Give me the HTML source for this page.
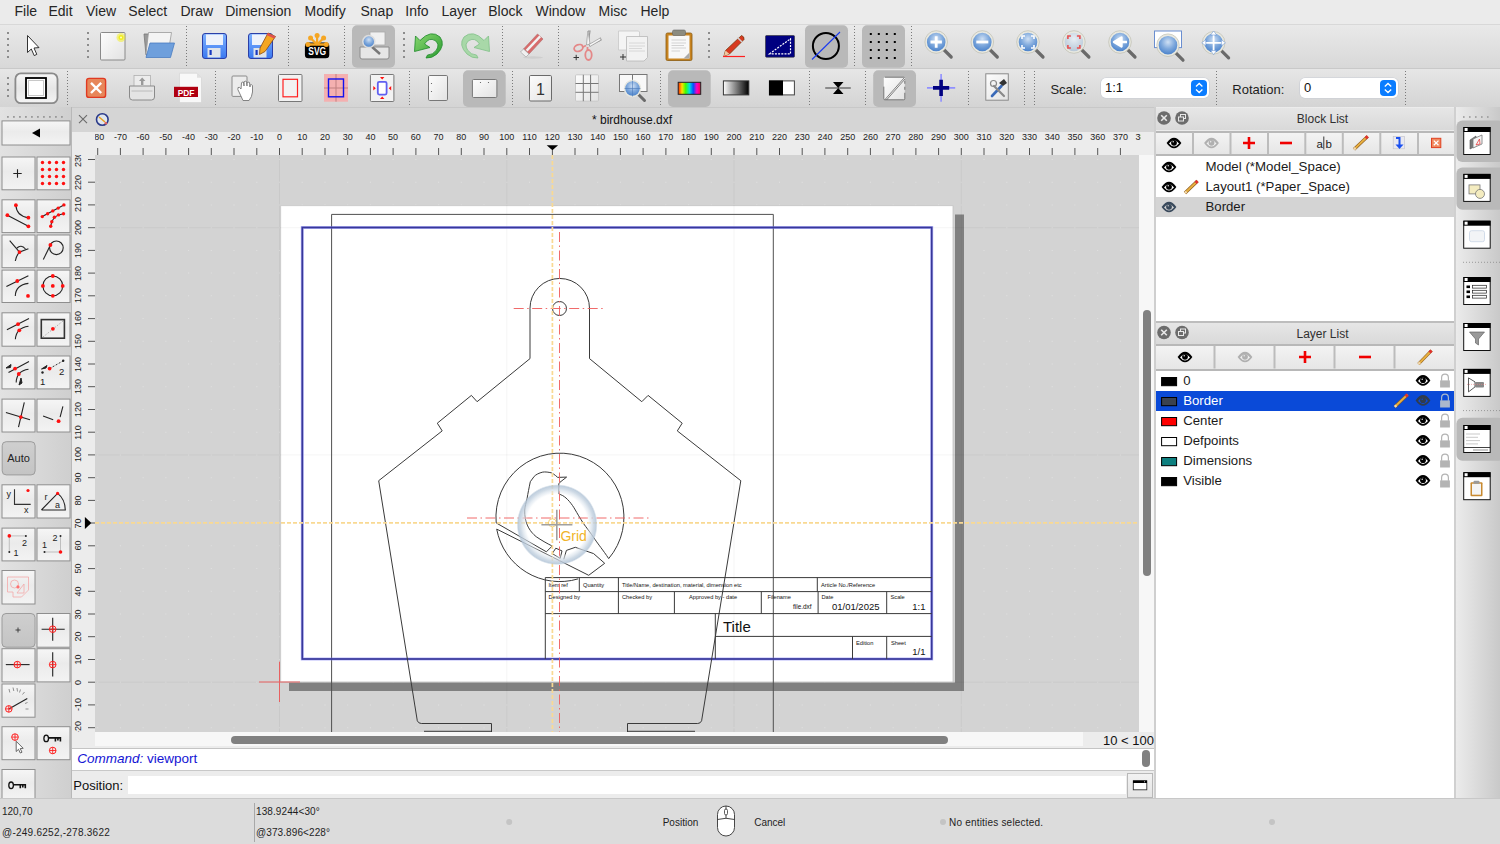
<!DOCTYPE html>
<html><head><meta charset="utf-8">
<style>
*{box-sizing:border-box}
html,body{margin:0;padding:0}
body{width:1500px;height:844px;position:relative;overflow:hidden;background:#e4e4e4;font-family:"Liberation Sans",sans-serif;color:#222}
.a{position:absolute}
.t{position:absolute;white-space:nowrap;line-height:1}
svg{position:absolute;overflow:hidden}
#menubar{left:0;top:0;width:1500px;height:24px;background:#ebebeb}
#menubar span{position:absolute;top:3px;font-size:14px;color:#262626}
#tb1{left:0;top:24px;width:1500px;height:44px;background:linear-gradient(#e9e9e9,#d8d8d8);border-top:1px solid #d8d8d8}
#tb2{left:0;top:68px;width:1500px;height:39px;background:linear-gradient(#e6e6e6,#d4d4d4);border-top:1px solid #c9c9c9}
.sep{position:absolute;width:2px;border-left:2px dotted #888}
.pressed{position:absolute;background:#b9b9b9;border-radius:5px}
#left{left:0;top:107px;width:72px;height:691px;background:linear-gradient(90deg,#e2e2e2,#cfcfcf);border-right:1px solid #b8b8b8}
#tabbar{left:72px;top:107px;width:1082px;height:25px;background:#d5d5d5;border-top:1px solid #c8c8c8}
#rtop{left:72px;top:132px;width:1082px;height:23px;background:#ececec}
#rleft{left:72px;top:155px;width:23px;height:591px;background:#ececec}
#vscroll{left:1139px;top:155px;width:15px;height:577px;background:#f7f7f7}
#hscroll{left:95px;top:732px;width:988px;height:14px;background:#f7f7f7}
#scalelbl{left:1083px;top:732px;width:71px;height:14px;background:#ececec}
#cmd{left:72px;top:746px;width:1082px;height:52px;background:#ececec}
#status{left:0;top:798px;width:1500px;height:46px;background:#dcdcdc;border-top:1px solid #c8c8c8}
#dock{left:1154px;top:107px;width:301px;height:691px;background:#ececec;border-left:2px solid #c4c4c4}
#rtool{left:1455px;top:107px;width:45px;height:691px;background:linear-gradient(90deg,#ececec,#c9c9c9)}
.sb{font-size:10px;color:#1e1e1e}
.rl{position:absolute;font-size:9px;line-height:1;color:#222;white-space:nowrap;text-align:center;width:30px}

</style></head><body>
<div id="menubar" class="a">
<span style="left:14.5px">File</span><span style="left:48.5px">Edit</span><span style="left:86px">View</span><span style="left:128.3px">Select</span><span style="left:180.4px">Draw</span><span style="left:225.2px">Dimension</span><span style="left:304.5px">Modify</span><span style="left:360.5px">Snap</span><span style="left:405.3px">Info</span><span style="left:441.5px">Layer</span><span style="left:488.2px">Block</span><span style="left:535.5px">Window</span><span style="left:598.5px">Misc</span><span style="left:640.5px">Help</span>
</div>
<div id="tb1" class="a"></div>
<div id="tb2" class="a"></div>
<div id="left" class="a"></div>
<div id="tabbar" class="a"></div>
<div id="rtop" class="a"></div>
<div id="rleft" class="a"></div>
<div id="vscroll" class="a"></div>
<div id="hscroll" class="a"></div>
<div id="scalelbl" class="a"></div>
<div id="cmd" class="a"></div>
<div id="status" class="a"></div>
<div id="dock" class="a"></div>
<div id="rtool" class="a"></div>

<svg style="left:95px;top:155px" width="1044" height="577" viewBox="95 155 1044 577">
<defs><radialGradient id="glow" cx="0.5" cy="0.5" r="0.5"><stop offset="0" stop-color="#ffffff" stop-opacity="0"/><stop offset="0.74" stop-color="#ffffff" stop-opacity="0"/><stop offset="0.8" stop-color="#e4ebf2" stop-opacity="0.5"/><stop offset="0.9" stop-color="#c4d2e0" stop-opacity="0.8"/><stop offset="0.96" stop-color="#b4c6d8" stop-opacity="0.85"/><stop offset="1" stop-color="#b8c8d8" stop-opacity="0"/></radialGradient></defs>
<rect x="95" y="155" width="1044" height="577" fill="#d3d3d3"/>
<path d="M97.2 727.2h1v1h-1zM97.2 704.4h1v1h-1zM97.2 681.7h1v1h-1zM97.2 659.0h1v1h-1zM97.2 636.2h1v1h-1zM97.2 613.5h1v1h-1zM97.2 590.8h1v1h-1zM97.2 568.1h1v1h-1zM97.2 545.3h1v1h-1zM97.2 522.6h1v1h-1zM97.2 499.9h1v1h-1zM97.2 477.2h1v1h-1zM97.2 454.4h1v1h-1zM97.2 431.7h1v1h-1zM97.2 409.0h1v1h-1zM97.2 386.2h1v1h-1zM97.2 363.5h1v1h-1zM97.2 340.8h1v1h-1zM97.2 318.1h1v1h-1zM97.2 295.3h1v1h-1zM97.2 272.6h1v1h-1zM97.2 249.9h1v1h-1zM97.2 227.2h1v1h-1zM97.2 204.4h1v1h-1zM97.2 181.7h1v1h-1zM97.2 159.0h1v1h-1zM119.9 727.2h1v1h-1zM119.9 704.4h1v1h-1zM119.9 681.7h1v1h-1zM119.9 659.0h1v1h-1zM119.9 636.2h1v1h-1zM119.9 613.5h1v1h-1zM119.9 590.8h1v1h-1zM119.9 568.1h1v1h-1zM119.9 545.3h1v1h-1zM119.9 522.6h1v1h-1zM119.9 499.9h1v1h-1zM119.9 477.2h1v1h-1zM119.9 454.4h1v1h-1zM119.9 431.7h1v1h-1zM119.9 409.0h1v1h-1zM119.9 386.2h1v1h-1zM119.9 363.5h1v1h-1zM119.9 340.8h1v1h-1zM119.9 318.1h1v1h-1zM119.9 295.3h1v1h-1zM119.9 272.6h1v1h-1zM119.9 249.9h1v1h-1zM119.9 227.2h1v1h-1zM119.9 204.4h1v1h-1zM119.9 181.7h1v1h-1zM119.9 159.0h1v1h-1zM142.6 727.2h1v1h-1zM142.6 704.4h1v1h-1zM142.6 681.7h1v1h-1zM142.6 659.0h1v1h-1zM142.6 636.2h1v1h-1zM142.6 613.5h1v1h-1zM142.6 590.8h1v1h-1zM142.6 568.1h1v1h-1zM142.6 545.3h1v1h-1zM142.6 522.6h1v1h-1zM142.6 499.9h1v1h-1zM142.6 477.2h1v1h-1zM142.6 454.4h1v1h-1zM142.6 431.7h1v1h-1zM142.6 409.0h1v1h-1zM142.6 386.2h1v1h-1zM142.6 363.5h1v1h-1zM142.6 340.8h1v1h-1zM142.6 318.1h1v1h-1zM142.6 295.3h1v1h-1zM142.6 272.6h1v1h-1zM142.6 249.9h1v1h-1zM142.6 227.2h1v1h-1zM142.6 204.4h1v1h-1zM142.6 181.7h1v1h-1zM142.6 159.0h1v1h-1zM165.4 727.2h1v1h-1zM165.4 704.4h1v1h-1zM165.4 681.7h1v1h-1zM165.4 659.0h1v1h-1zM165.4 636.2h1v1h-1zM165.4 613.5h1v1h-1zM165.4 590.8h1v1h-1zM165.4 568.1h1v1h-1zM165.4 545.3h1v1h-1zM165.4 522.6h1v1h-1zM165.4 499.9h1v1h-1zM165.4 477.2h1v1h-1zM165.4 454.4h1v1h-1zM165.4 431.7h1v1h-1zM165.4 409.0h1v1h-1zM165.4 386.2h1v1h-1zM165.4 363.5h1v1h-1zM165.4 340.8h1v1h-1zM165.4 318.1h1v1h-1zM165.4 295.3h1v1h-1zM165.4 272.6h1v1h-1zM165.4 249.9h1v1h-1zM165.4 227.2h1v1h-1zM165.4 204.4h1v1h-1zM165.4 181.7h1v1h-1zM165.4 159.0h1v1h-1zM188.1 727.2h1v1h-1zM188.1 704.4h1v1h-1zM188.1 681.7h1v1h-1zM188.1 659.0h1v1h-1zM188.1 636.2h1v1h-1zM188.1 613.5h1v1h-1zM188.1 590.8h1v1h-1zM188.1 568.1h1v1h-1zM188.1 545.3h1v1h-1zM188.1 522.6h1v1h-1zM188.1 499.9h1v1h-1zM188.1 477.2h1v1h-1zM188.1 454.4h1v1h-1zM188.1 431.7h1v1h-1zM188.1 409.0h1v1h-1zM188.1 386.2h1v1h-1zM188.1 363.5h1v1h-1zM188.1 340.8h1v1h-1zM188.1 318.1h1v1h-1zM188.1 295.3h1v1h-1zM188.1 272.6h1v1h-1zM188.1 249.9h1v1h-1zM188.1 227.2h1v1h-1zM188.1 204.4h1v1h-1zM188.1 181.7h1v1h-1zM188.1 159.0h1v1h-1zM210.8 727.2h1v1h-1zM210.8 704.4h1v1h-1zM210.8 681.7h1v1h-1zM210.8 659.0h1v1h-1zM210.8 636.2h1v1h-1zM210.8 613.5h1v1h-1zM210.8 590.8h1v1h-1zM210.8 568.1h1v1h-1zM210.8 545.3h1v1h-1zM210.8 522.6h1v1h-1zM210.8 499.9h1v1h-1zM210.8 477.2h1v1h-1zM210.8 454.4h1v1h-1zM210.8 431.7h1v1h-1zM210.8 409.0h1v1h-1zM210.8 386.2h1v1h-1zM210.8 363.5h1v1h-1zM210.8 340.8h1v1h-1zM210.8 318.1h1v1h-1zM210.8 295.3h1v1h-1zM210.8 272.6h1v1h-1zM210.8 249.9h1v1h-1zM210.8 227.2h1v1h-1zM210.8 204.4h1v1h-1zM210.8 181.7h1v1h-1zM210.8 159.0h1v1h-1zM233.5 727.2h1v1h-1zM233.5 704.4h1v1h-1zM233.5 681.7h1v1h-1zM233.5 659.0h1v1h-1zM233.5 636.2h1v1h-1zM233.5 613.5h1v1h-1zM233.5 590.8h1v1h-1zM233.5 568.1h1v1h-1zM233.5 545.3h1v1h-1zM233.5 522.6h1v1h-1zM233.5 499.9h1v1h-1zM233.5 477.2h1v1h-1zM233.5 454.4h1v1h-1zM233.5 431.7h1v1h-1zM233.5 409.0h1v1h-1zM233.5 386.2h1v1h-1zM233.5 363.5h1v1h-1zM233.5 340.8h1v1h-1zM233.5 318.1h1v1h-1zM233.5 295.3h1v1h-1zM233.5 272.6h1v1h-1zM233.5 249.9h1v1h-1zM233.5 227.2h1v1h-1zM233.5 204.4h1v1h-1zM233.5 181.7h1v1h-1zM233.5 159.0h1v1h-1zM256.3 727.2h1v1h-1zM256.3 704.4h1v1h-1zM256.3 681.7h1v1h-1zM256.3 659.0h1v1h-1zM256.3 636.2h1v1h-1zM256.3 613.5h1v1h-1zM256.3 590.8h1v1h-1zM256.3 568.1h1v1h-1zM256.3 545.3h1v1h-1zM256.3 522.6h1v1h-1zM256.3 499.9h1v1h-1zM256.3 477.2h1v1h-1zM256.3 454.4h1v1h-1zM256.3 431.7h1v1h-1zM256.3 409.0h1v1h-1zM256.3 386.2h1v1h-1zM256.3 363.5h1v1h-1zM256.3 340.8h1v1h-1zM256.3 318.1h1v1h-1zM256.3 295.3h1v1h-1zM256.3 272.6h1v1h-1zM256.3 249.9h1v1h-1zM256.3 227.2h1v1h-1zM256.3 204.4h1v1h-1zM256.3 181.7h1v1h-1zM256.3 159.0h1v1h-1zM279.0 727.2h1v1h-1zM279.0 704.4h1v1h-1zM279.0 681.7h1v1h-1zM279.0 659.0h1v1h-1zM279.0 636.2h1v1h-1zM279.0 613.5h1v1h-1zM279.0 590.8h1v1h-1zM279.0 568.1h1v1h-1zM279.0 545.3h1v1h-1zM279.0 522.6h1v1h-1zM279.0 499.9h1v1h-1zM279.0 477.2h1v1h-1zM279.0 454.4h1v1h-1zM279.0 431.7h1v1h-1zM279.0 409.0h1v1h-1zM279.0 386.2h1v1h-1zM279.0 363.5h1v1h-1zM279.0 340.8h1v1h-1zM279.0 318.1h1v1h-1zM279.0 295.3h1v1h-1zM279.0 272.6h1v1h-1zM279.0 249.9h1v1h-1zM279.0 227.2h1v1h-1zM279.0 204.4h1v1h-1zM279.0 181.7h1v1h-1zM279.0 159.0h1v1h-1zM301.7 727.2h1v1h-1zM301.7 704.4h1v1h-1zM301.7 681.7h1v1h-1zM301.7 659.0h1v1h-1zM301.7 636.2h1v1h-1zM301.7 613.5h1v1h-1zM301.7 590.8h1v1h-1zM301.7 568.1h1v1h-1zM301.7 545.3h1v1h-1zM301.7 522.6h1v1h-1zM301.7 499.9h1v1h-1zM301.7 477.2h1v1h-1zM301.7 454.4h1v1h-1zM301.7 431.7h1v1h-1zM301.7 409.0h1v1h-1zM301.7 386.2h1v1h-1zM301.7 363.5h1v1h-1zM301.7 340.8h1v1h-1zM301.7 318.1h1v1h-1zM301.7 295.3h1v1h-1zM301.7 272.6h1v1h-1zM301.7 249.9h1v1h-1zM301.7 227.2h1v1h-1zM301.7 204.4h1v1h-1zM301.7 181.7h1v1h-1zM301.7 159.0h1v1h-1zM324.5 727.2h1v1h-1zM324.5 704.4h1v1h-1zM324.5 681.7h1v1h-1zM324.5 659.0h1v1h-1zM324.5 636.2h1v1h-1zM324.5 613.5h1v1h-1zM324.5 590.8h1v1h-1zM324.5 568.1h1v1h-1zM324.5 545.3h1v1h-1zM324.5 522.6h1v1h-1zM324.5 499.9h1v1h-1zM324.5 477.2h1v1h-1zM324.5 454.4h1v1h-1zM324.5 431.7h1v1h-1zM324.5 409.0h1v1h-1zM324.5 386.2h1v1h-1zM324.5 363.5h1v1h-1zM324.5 340.8h1v1h-1zM324.5 318.1h1v1h-1zM324.5 295.3h1v1h-1zM324.5 272.6h1v1h-1zM324.5 249.9h1v1h-1zM324.5 227.2h1v1h-1zM324.5 204.4h1v1h-1zM324.5 181.7h1v1h-1zM324.5 159.0h1v1h-1zM347.2 727.2h1v1h-1zM347.2 704.4h1v1h-1zM347.2 681.7h1v1h-1zM347.2 659.0h1v1h-1zM347.2 636.2h1v1h-1zM347.2 613.5h1v1h-1zM347.2 590.8h1v1h-1zM347.2 568.1h1v1h-1zM347.2 545.3h1v1h-1zM347.2 522.6h1v1h-1zM347.2 499.9h1v1h-1zM347.2 477.2h1v1h-1zM347.2 454.4h1v1h-1zM347.2 431.7h1v1h-1zM347.2 409.0h1v1h-1zM347.2 386.2h1v1h-1zM347.2 363.5h1v1h-1zM347.2 340.8h1v1h-1zM347.2 318.1h1v1h-1zM347.2 295.3h1v1h-1zM347.2 272.6h1v1h-1zM347.2 249.9h1v1h-1zM347.2 227.2h1v1h-1zM347.2 204.4h1v1h-1zM347.2 181.7h1v1h-1zM347.2 159.0h1v1h-1zM369.9 727.2h1v1h-1zM369.9 704.4h1v1h-1zM369.9 681.7h1v1h-1zM369.9 659.0h1v1h-1zM369.9 636.2h1v1h-1zM369.9 613.5h1v1h-1zM369.9 590.8h1v1h-1zM369.9 568.1h1v1h-1zM369.9 545.3h1v1h-1zM369.9 522.6h1v1h-1zM369.9 499.9h1v1h-1zM369.9 477.2h1v1h-1zM369.9 454.4h1v1h-1zM369.9 431.7h1v1h-1zM369.9 409.0h1v1h-1zM369.9 386.2h1v1h-1zM369.9 363.5h1v1h-1zM369.9 340.8h1v1h-1zM369.9 318.1h1v1h-1zM369.9 295.3h1v1h-1zM369.9 272.6h1v1h-1zM369.9 249.9h1v1h-1zM369.9 227.2h1v1h-1zM369.9 204.4h1v1h-1zM369.9 181.7h1v1h-1zM369.9 159.0h1v1h-1zM392.6 727.2h1v1h-1zM392.6 704.4h1v1h-1zM392.6 681.7h1v1h-1zM392.6 659.0h1v1h-1zM392.6 636.2h1v1h-1zM392.6 613.5h1v1h-1zM392.6 590.8h1v1h-1zM392.6 568.1h1v1h-1zM392.6 545.3h1v1h-1zM392.6 522.6h1v1h-1zM392.6 499.9h1v1h-1zM392.6 477.2h1v1h-1zM392.6 454.4h1v1h-1zM392.6 431.7h1v1h-1zM392.6 409.0h1v1h-1zM392.6 386.2h1v1h-1zM392.6 363.5h1v1h-1zM392.6 340.8h1v1h-1zM392.6 318.1h1v1h-1zM392.6 295.3h1v1h-1zM392.6 272.6h1v1h-1zM392.6 249.9h1v1h-1zM392.6 227.2h1v1h-1zM392.6 204.4h1v1h-1zM392.6 181.7h1v1h-1zM392.6 159.0h1v1h-1zM415.4 727.2h1v1h-1zM415.4 704.4h1v1h-1zM415.4 681.7h1v1h-1zM415.4 659.0h1v1h-1zM415.4 636.2h1v1h-1zM415.4 613.5h1v1h-1zM415.4 590.8h1v1h-1zM415.4 568.1h1v1h-1zM415.4 545.3h1v1h-1zM415.4 522.6h1v1h-1zM415.4 499.9h1v1h-1zM415.4 477.2h1v1h-1zM415.4 454.4h1v1h-1zM415.4 431.7h1v1h-1zM415.4 409.0h1v1h-1zM415.4 386.2h1v1h-1zM415.4 363.5h1v1h-1zM415.4 340.8h1v1h-1zM415.4 318.1h1v1h-1zM415.4 295.3h1v1h-1zM415.4 272.6h1v1h-1zM415.4 249.9h1v1h-1zM415.4 227.2h1v1h-1zM415.4 204.4h1v1h-1zM415.4 181.7h1v1h-1zM415.4 159.0h1v1h-1zM438.1 727.2h1v1h-1zM438.1 704.4h1v1h-1zM438.1 681.7h1v1h-1zM438.1 659.0h1v1h-1zM438.1 636.2h1v1h-1zM438.1 613.5h1v1h-1zM438.1 590.8h1v1h-1zM438.1 568.1h1v1h-1zM438.1 545.3h1v1h-1zM438.1 522.6h1v1h-1zM438.1 499.9h1v1h-1zM438.1 477.2h1v1h-1zM438.1 454.4h1v1h-1zM438.1 431.7h1v1h-1zM438.1 409.0h1v1h-1zM438.1 386.2h1v1h-1zM438.1 363.5h1v1h-1zM438.1 340.8h1v1h-1zM438.1 318.1h1v1h-1zM438.1 295.3h1v1h-1zM438.1 272.6h1v1h-1zM438.1 249.9h1v1h-1zM438.1 227.2h1v1h-1zM438.1 204.4h1v1h-1zM438.1 181.7h1v1h-1zM438.1 159.0h1v1h-1zM460.8 727.2h1v1h-1zM460.8 704.4h1v1h-1zM460.8 681.7h1v1h-1zM460.8 659.0h1v1h-1zM460.8 636.2h1v1h-1zM460.8 613.5h1v1h-1zM460.8 590.8h1v1h-1zM460.8 568.1h1v1h-1zM460.8 545.3h1v1h-1zM460.8 522.6h1v1h-1zM460.8 499.9h1v1h-1zM460.8 477.2h1v1h-1zM460.8 454.4h1v1h-1zM460.8 431.7h1v1h-1zM460.8 409.0h1v1h-1zM460.8 386.2h1v1h-1zM460.8 363.5h1v1h-1zM460.8 340.8h1v1h-1zM460.8 318.1h1v1h-1zM460.8 295.3h1v1h-1zM460.8 272.6h1v1h-1zM460.8 249.9h1v1h-1zM460.8 227.2h1v1h-1zM460.8 204.4h1v1h-1zM460.8 181.7h1v1h-1zM460.8 159.0h1v1h-1zM483.5 727.2h1v1h-1zM483.5 704.4h1v1h-1zM483.5 681.7h1v1h-1zM483.5 659.0h1v1h-1zM483.5 636.2h1v1h-1zM483.5 613.5h1v1h-1zM483.5 590.8h1v1h-1zM483.5 568.1h1v1h-1zM483.5 545.3h1v1h-1zM483.5 522.6h1v1h-1zM483.5 499.9h1v1h-1zM483.5 477.2h1v1h-1zM483.5 454.4h1v1h-1zM483.5 431.7h1v1h-1zM483.5 409.0h1v1h-1zM483.5 386.2h1v1h-1zM483.5 363.5h1v1h-1zM483.5 340.8h1v1h-1zM483.5 318.1h1v1h-1zM483.5 295.3h1v1h-1zM483.5 272.6h1v1h-1zM483.5 249.9h1v1h-1zM483.5 227.2h1v1h-1zM483.5 204.4h1v1h-1zM483.5 181.7h1v1h-1zM483.5 159.0h1v1h-1zM506.3 727.2h1v1h-1zM506.3 704.4h1v1h-1zM506.3 681.7h1v1h-1zM506.3 659.0h1v1h-1zM506.3 636.2h1v1h-1zM506.3 613.5h1v1h-1zM506.3 590.8h1v1h-1zM506.3 568.1h1v1h-1zM506.3 545.3h1v1h-1zM506.3 522.6h1v1h-1zM506.3 499.9h1v1h-1zM506.3 477.2h1v1h-1zM506.3 454.4h1v1h-1zM506.3 431.7h1v1h-1zM506.3 409.0h1v1h-1zM506.3 386.2h1v1h-1zM506.3 363.5h1v1h-1zM506.3 340.8h1v1h-1zM506.3 318.1h1v1h-1zM506.3 295.3h1v1h-1zM506.3 272.6h1v1h-1zM506.3 249.9h1v1h-1zM506.3 227.2h1v1h-1zM506.3 204.4h1v1h-1zM506.3 181.7h1v1h-1zM506.3 159.0h1v1h-1zM529.0 727.2h1v1h-1zM529.0 704.4h1v1h-1zM529.0 681.7h1v1h-1zM529.0 659.0h1v1h-1zM529.0 636.2h1v1h-1zM529.0 613.5h1v1h-1zM529.0 590.8h1v1h-1zM529.0 568.1h1v1h-1zM529.0 545.3h1v1h-1zM529.0 522.6h1v1h-1zM529.0 499.9h1v1h-1zM529.0 477.2h1v1h-1zM529.0 454.4h1v1h-1zM529.0 431.7h1v1h-1zM529.0 409.0h1v1h-1zM529.0 386.2h1v1h-1zM529.0 363.5h1v1h-1zM529.0 340.8h1v1h-1zM529.0 318.1h1v1h-1zM529.0 295.3h1v1h-1zM529.0 272.6h1v1h-1zM529.0 249.9h1v1h-1zM529.0 227.2h1v1h-1zM529.0 204.4h1v1h-1zM529.0 181.7h1v1h-1zM529.0 159.0h1v1h-1zM551.7 727.2h1v1h-1zM551.7 704.4h1v1h-1zM551.7 681.7h1v1h-1zM551.7 659.0h1v1h-1zM551.7 636.2h1v1h-1zM551.7 613.5h1v1h-1zM551.7 590.8h1v1h-1zM551.7 568.1h1v1h-1zM551.7 545.3h1v1h-1zM551.7 522.6h1v1h-1zM551.7 499.9h1v1h-1zM551.7 477.2h1v1h-1zM551.7 454.4h1v1h-1zM551.7 431.7h1v1h-1zM551.7 409.0h1v1h-1zM551.7 386.2h1v1h-1zM551.7 363.5h1v1h-1zM551.7 340.8h1v1h-1zM551.7 318.1h1v1h-1zM551.7 295.3h1v1h-1zM551.7 272.6h1v1h-1zM551.7 249.9h1v1h-1zM551.7 227.2h1v1h-1zM551.7 204.4h1v1h-1zM551.7 181.7h1v1h-1zM551.7 159.0h1v1h-1zM574.5 727.2h1v1h-1zM574.5 704.4h1v1h-1zM574.5 681.7h1v1h-1zM574.5 659.0h1v1h-1zM574.5 636.2h1v1h-1zM574.5 613.5h1v1h-1zM574.5 590.8h1v1h-1zM574.5 568.1h1v1h-1zM574.5 545.3h1v1h-1zM574.5 522.6h1v1h-1zM574.5 499.9h1v1h-1zM574.5 477.2h1v1h-1zM574.5 454.4h1v1h-1zM574.5 431.7h1v1h-1zM574.5 409.0h1v1h-1zM574.5 386.2h1v1h-1zM574.5 363.5h1v1h-1zM574.5 340.8h1v1h-1zM574.5 318.1h1v1h-1zM574.5 295.3h1v1h-1zM574.5 272.6h1v1h-1zM574.5 249.9h1v1h-1zM574.5 227.2h1v1h-1zM574.5 204.4h1v1h-1zM574.5 181.7h1v1h-1zM574.5 159.0h1v1h-1zM597.2 727.2h1v1h-1zM597.2 704.4h1v1h-1zM597.2 681.7h1v1h-1zM597.2 659.0h1v1h-1zM597.2 636.2h1v1h-1zM597.2 613.5h1v1h-1zM597.2 590.8h1v1h-1zM597.2 568.1h1v1h-1zM597.2 545.3h1v1h-1zM597.2 522.6h1v1h-1zM597.2 499.9h1v1h-1zM597.2 477.2h1v1h-1zM597.2 454.4h1v1h-1zM597.2 431.7h1v1h-1zM597.2 409.0h1v1h-1zM597.2 386.2h1v1h-1zM597.2 363.5h1v1h-1zM597.2 340.8h1v1h-1zM597.2 318.1h1v1h-1zM597.2 295.3h1v1h-1zM597.2 272.6h1v1h-1zM597.2 249.9h1v1h-1zM597.2 227.2h1v1h-1zM597.2 204.4h1v1h-1zM597.2 181.7h1v1h-1zM597.2 159.0h1v1h-1zM619.9 727.2h1v1h-1zM619.9 704.4h1v1h-1zM619.9 681.7h1v1h-1zM619.9 659.0h1v1h-1zM619.9 636.2h1v1h-1zM619.9 613.5h1v1h-1zM619.9 590.8h1v1h-1zM619.9 568.1h1v1h-1zM619.9 545.3h1v1h-1zM619.9 522.6h1v1h-1zM619.9 499.9h1v1h-1zM619.9 477.2h1v1h-1zM619.9 454.4h1v1h-1zM619.9 431.7h1v1h-1zM619.9 409.0h1v1h-1zM619.9 386.2h1v1h-1zM619.9 363.5h1v1h-1zM619.9 340.8h1v1h-1zM619.9 318.1h1v1h-1zM619.9 295.3h1v1h-1zM619.9 272.6h1v1h-1zM619.9 249.9h1v1h-1zM619.9 227.2h1v1h-1zM619.9 204.4h1v1h-1zM619.9 181.7h1v1h-1zM619.9 159.0h1v1h-1zM642.6 727.2h1v1h-1zM642.6 704.4h1v1h-1zM642.6 681.7h1v1h-1zM642.6 659.0h1v1h-1zM642.6 636.2h1v1h-1zM642.6 613.5h1v1h-1zM642.6 590.8h1v1h-1zM642.6 568.1h1v1h-1zM642.6 545.3h1v1h-1zM642.6 522.6h1v1h-1zM642.6 499.9h1v1h-1zM642.6 477.2h1v1h-1zM642.6 454.4h1v1h-1zM642.6 431.7h1v1h-1zM642.6 409.0h1v1h-1zM642.6 386.2h1v1h-1zM642.6 363.5h1v1h-1zM642.6 340.8h1v1h-1zM642.6 318.1h1v1h-1zM642.6 295.3h1v1h-1zM642.6 272.6h1v1h-1zM642.6 249.9h1v1h-1zM642.6 227.2h1v1h-1zM642.6 204.4h1v1h-1zM642.6 181.7h1v1h-1zM642.6 159.0h1v1h-1zM665.4 727.2h1v1h-1zM665.4 704.4h1v1h-1zM665.4 681.7h1v1h-1zM665.4 659.0h1v1h-1zM665.4 636.2h1v1h-1zM665.4 613.5h1v1h-1zM665.4 590.8h1v1h-1zM665.4 568.1h1v1h-1zM665.4 545.3h1v1h-1zM665.4 522.6h1v1h-1zM665.4 499.9h1v1h-1zM665.4 477.2h1v1h-1zM665.4 454.4h1v1h-1zM665.4 431.7h1v1h-1zM665.4 409.0h1v1h-1zM665.4 386.2h1v1h-1zM665.4 363.5h1v1h-1zM665.4 340.8h1v1h-1zM665.4 318.1h1v1h-1zM665.4 295.3h1v1h-1zM665.4 272.6h1v1h-1zM665.4 249.9h1v1h-1zM665.4 227.2h1v1h-1zM665.4 204.4h1v1h-1zM665.4 181.7h1v1h-1zM665.4 159.0h1v1h-1zM688.1 727.2h1v1h-1zM688.1 704.4h1v1h-1zM688.1 681.7h1v1h-1zM688.1 659.0h1v1h-1zM688.1 636.2h1v1h-1zM688.1 613.5h1v1h-1zM688.1 590.8h1v1h-1zM688.1 568.1h1v1h-1zM688.1 545.3h1v1h-1zM688.1 522.6h1v1h-1zM688.1 499.9h1v1h-1zM688.1 477.2h1v1h-1zM688.1 454.4h1v1h-1zM688.1 431.7h1v1h-1zM688.1 409.0h1v1h-1zM688.1 386.2h1v1h-1zM688.1 363.5h1v1h-1zM688.1 340.8h1v1h-1zM688.1 318.1h1v1h-1zM688.1 295.3h1v1h-1zM688.1 272.6h1v1h-1zM688.1 249.9h1v1h-1zM688.1 227.2h1v1h-1zM688.1 204.4h1v1h-1zM688.1 181.7h1v1h-1zM688.1 159.0h1v1h-1zM710.8 727.2h1v1h-1zM710.8 704.4h1v1h-1zM710.8 681.7h1v1h-1zM710.8 659.0h1v1h-1zM710.8 636.2h1v1h-1zM710.8 613.5h1v1h-1zM710.8 590.8h1v1h-1zM710.8 568.1h1v1h-1zM710.8 545.3h1v1h-1zM710.8 522.6h1v1h-1zM710.8 499.9h1v1h-1zM710.8 477.2h1v1h-1zM710.8 454.4h1v1h-1zM710.8 431.7h1v1h-1zM710.8 409.0h1v1h-1zM710.8 386.2h1v1h-1zM710.8 363.5h1v1h-1zM710.8 340.8h1v1h-1zM710.8 318.1h1v1h-1zM710.8 295.3h1v1h-1zM710.8 272.6h1v1h-1zM710.8 249.9h1v1h-1zM710.8 227.2h1v1h-1zM710.8 204.4h1v1h-1zM710.8 181.7h1v1h-1zM710.8 159.0h1v1h-1zM733.5 727.2h1v1h-1zM733.5 704.4h1v1h-1zM733.5 681.7h1v1h-1zM733.5 659.0h1v1h-1zM733.5 636.2h1v1h-1zM733.5 613.5h1v1h-1zM733.5 590.8h1v1h-1zM733.5 568.1h1v1h-1zM733.5 545.3h1v1h-1zM733.5 522.6h1v1h-1zM733.5 499.9h1v1h-1zM733.5 477.2h1v1h-1zM733.5 454.4h1v1h-1zM733.5 431.7h1v1h-1zM733.5 409.0h1v1h-1zM733.5 386.2h1v1h-1zM733.5 363.5h1v1h-1zM733.5 340.8h1v1h-1zM733.5 318.1h1v1h-1zM733.5 295.3h1v1h-1zM733.5 272.6h1v1h-1zM733.5 249.9h1v1h-1zM733.5 227.2h1v1h-1zM733.5 204.4h1v1h-1zM733.5 181.7h1v1h-1zM733.5 159.0h1v1h-1zM756.3 727.2h1v1h-1zM756.3 704.4h1v1h-1zM756.3 681.7h1v1h-1zM756.3 659.0h1v1h-1zM756.3 636.2h1v1h-1zM756.3 613.5h1v1h-1zM756.3 590.8h1v1h-1zM756.3 568.1h1v1h-1zM756.3 545.3h1v1h-1zM756.3 522.6h1v1h-1zM756.3 499.9h1v1h-1zM756.3 477.2h1v1h-1zM756.3 454.4h1v1h-1zM756.3 431.7h1v1h-1zM756.3 409.0h1v1h-1zM756.3 386.2h1v1h-1zM756.3 363.5h1v1h-1zM756.3 340.8h1v1h-1zM756.3 318.1h1v1h-1zM756.3 295.3h1v1h-1zM756.3 272.6h1v1h-1zM756.3 249.9h1v1h-1zM756.3 227.2h1v1h-1zM756.3 204.4h1v1h-1zM756.3 181.7h1v1h-1zM756.3 159.0h1v1h-1zM779.0 727.2h1v1h-1zM779.0 704.4h1v1h-1zM779.0 681.7h1v1h-1zM779.0 659.0h1v1h-1zM779.0 636.2h1v1h-1zM779.0 613.5h1v1h-1zM779.0 590.8h1v1h-1zM779.0 568.1h1v1h-1zM779.0 545.3h1v1h-1zM779.0 522.6h1v1h-1zM779.0 499.9h1v1h-1zM779.0 477.2h1v1h-1zM779.0 454.4h1v1h-1zM779.0 431.7h1v1h-1zM779.0 409.0h1v1h-1zM779.0 386.2h1v1h-1zM779.0 363.5h1v1h-1zM779.0 340.8h1v1h-1zM779.0 318.1h1v1h-1zM779.0 295.3h1v1h-1zM779.0 272.6h1v1h-1zM779.0 249.9h1v1h-1zM779.0 227.2h1v1h-1zM779.0 204.4h1v1h-1zM779.0 181.7h1v1h-1zM779.0 159.0h1v1h-1zM801.7 727.2h1v1h-1zM801.7 704.4h1v1h-1zM801.7 681.7h1v1h-1zM801.7 659.0h1v1h-1zM801.7 636.2h1v1h-1zM801.7 613.5h1v1h-1zM801.7 590.8h1v1h-1zM801.7 568.1h1v1h-1zM801.7 545.3h1v1h-1zM801.7 522.6h1v1h-1zM801.7 499.9h1v1h-1zM801.7 477.2h1v1h-1zM801.7 454.4h1v1h-1zM801.7 431.7h1v1h-1zM801.7 409.0h1v1h-1zM801.7 386.2h1v1h-1zM801.7 363.5h1v1h-1zM801.7 340.8h1v1h-1zM801.7 318.1h1v1h-1zM801.7 295.3h1v1h-1zM801.7 272.6h1v1h-1zM801.7 249.9h1v1h-1zM801.7 227.2h1v1h-1zM801.7 204.4h1v1h-1zM801.7 181.7h1v1h-1zM801.7 159.0h1v1h-1zM824.4 727.2h1v1h-1zM824.4 704.4h1v1h-1zM824.4 681.7h1v1h-1zM824.4 659.0h1v1h-1zM824.4 636.2h1v1h-1zM824.4 613.5h1v1h-1zM824.4 590.8h1v1h-1zM824.4 568.1h1v1h-1zM824.4 545.3h1v1h-1zM824.4 522.6h1v1h-1zM824.4 499.9h1v1h-1zM824.4 477.2h1v1h-1zM824.4 454.4h1v1h-1zM824.4 431.7h1v1h-1zM824.4 409.0h1v1h-1zM824.4 386.2h1v1h-1zM824.4 363.5h1v1h-1zM824.4 340.8h1v1h-1zM824.4 318.1h1v1h-1zM824.4 295.3h1v1h-1zM824.4 272.6h1v1h-1zM824.4 249.9h1v1h-1zM824.4 227.2h1v1h-1zM824.4 204.4h1v1h-1zM824.4 181.7h1v1h-1zM824.4 159.0h1v1h-1zM847.2 727.2h1v1h-1zM847.2 704.4h1v1h-1zM847.2 681.7h1v1h-1zM847.2 659.0h1v1h-1zM847.2 636.2h1v1h-1zM847.2 613.5h1v1h-1zM847.2 590.8h1v1h-1zM847.2 568.1h1v1h-1zM847.2 545.3h1v1h-1zM847.2 522.6h1v1h-1zM847.2 499.9h1v1h-1zM847.2 477.2h1v1h-1zM847.2 454.4h1v1h-1zM847.2 431.7h1v1h-1zM847.2 409.0h1v1h-1zM847.2 386.2h1v1h-1zM847.2 363.5h1v1h-1zM847.2 340.8h1v1h-1zM847.2 318.1h1v1h-1zM847.2 295.3h1v1h-1zM847.2 272.6h1v1h-1zM847.2 249.9h1v1h-1zM847.2 227.2h1v1h-1zM847.2 204.4h1v1h-1zM847.2 181.7h1v1h-1zM847.2 159.0h1v1h-1zM869.9 727.2h1v1h-1zM869.9 704.4h1v1h-1zM869.9 681.7h1v1h-1zM869.9 659.0h1v1h-1zM869.9 636.2h1v1h-1zM869.9 613.5h1v1h-1zM869.9 590.8h1v1h-1zM869.9 568.1h1v1h-1zM869.9 545.3h1v1h-1zM869.9 522.6h1v1h-1zM869.9 499.9h1v1h-1zM869.9 477.2h1v1h-1zM869.9 454.4h1v1h-1zM869.9 431.7h1v1h-1zM869.9 409.0h1v1h-1zM869.9 386.2h1v1h-1zM869.9 363.5h1v1h-1zM869.9 340.8h1v1h-1zM869.9 318.1h1v1h-1zM869.9 295.3h1v1h-1zM869.9 272.6h1v1h-1zM869.9 249.9h1v1h-1zM869.9 227.2h1v1h-1zM869.9 204.4h1v1h-1zM869.9 181.7h1v1h-1zM869.9 159.0h1v1h-1zM892.6 727.2h1v1h-1zM892.6 704.4h1v1h-1zM892.6 681.7h1v1h-1zM892.6 659.0h1v1h-1zM892.6 636.2h1v1h-1zM892.6 613.5h1v1h-1zM892.6 590.8h1v1h-1zM892.6 568.1h1v1h-1zM892.6 545.3h1v1h-1zM892.6 522.6h1v1h-1zM892.6 499.9h1v1h-1zM892.6 477.2h1v1h-1zM892.6 454.4h1v1h-1zM892.6 431.7h1v1h-1zM892.6 409.0h1v1h-1zM892.6 386.2h1v1h-1zM892.6 363.5h1v1h-1zM892.6 340.8h1v1h-1zM892.6 318.1h1v1h-1zM892.6 295.3h1v1h-1zM892.6 272.6h1v1h-1zM892.6 249.9h1v1h-1zM892.6 227.2h1v1h-1zM892.6 204.4h1v1h-1zM892.6 181.7h1v1h-1zM892.6 159.0h1v1h-1zM915.4 727.2h1v1h-1zM915.4 704.4h1v1h-1zM915.4 681.7h1v1h-1zM915.4 659.0h1v1h-1zM915.4 636.2h1v1h-1zM915.4 613.5h1v1h-1zM915.4 590.8h1v1h-1zM915.4 568.1h1v1h-1zM915.4 545.3h1v1h-1zM915.4 522.6h1v1h-1zM915.4 499.9h1v1h-1zM915.4 477.2h1v1h-1zM915.4 454.4h1v1h-1zM915.4 431.7h1v1h-1zM915.4 409.0h1v1h-1zM915.4 386.2h1v1h-1zM915.4 363.5h1v1h-1zM915.4 340.8h1v1h-1zM915.4 318.1h1v1h-1zM915.4 295.3h1v1h-1zM915.4 272.6h1v1h-1zM915.4 249.9h1v1h-1zM915.4 227.2h1v1h-1zM915.4 204.4h1v1h-1zM915.4 181.7h1v1h-1zM915.4 159.0h1v1h-1zM938.1 727.2h1v1h-1zM938.1 704.4h1v1h-1zM938.1 681.7h1v1h-1zM938.1 659.0h1v1h-1zM938.1 636.2h1v1h-1zM938.1 613.5h1v1h-1zM938.1 590.8h1v1h-1zM938.1 568.1h1v1h-1zM938.1 545.3h1v1h-1zM938.1 522.6h1v1h-1zM938.1 499.9h1v1h-1zM938.1 477.2h1v1h-1zM938.1 454.4h1v1h-1zM938.1 431.7h1v1h-1zM938.1 409.0h1v1h-1zM938.1 386.2h1v1h-1zM938.1 363.5h1v1h-1zM938.1 340.8h1v1h-1zM938.1 318.1h1v1h-1zM938.1 295.3h1v1h-1zM938.1 272.6h1v1h-1zM938.1 249.9h1v1h-1zM938.1 227.2h1v1h-1zM938.1 204.4h1v1h-1zM938.1 181.7h1v1h-1zM938.1 159.0h1v1h-1zM960.8 727.2h1v1h-1zM960.8 704.4h1v1h-1zM960.8 681.7h1v1h-1zM960.8 659.0h1v1h-1zM960.8 636.2h1v1h-1zM960.8 613.5h1v1h-1zM960.8 590.8h1v1h-1zM960.8 568.1h1v1h-1zM960.8 545.3h1v1h-1zM960.8 522.6h1v1h-1zM960.8 499.9h1v1h-1zM960.8 477.2h1v1h-1zM960.8 454.4h1v1h-1zM960.8 431.7h1v1h-1zM960.8 409.0h1v1h-1zM960.8 386.2h1v1h-1zM960.8 363.5h1v1h-1zM960.8 340.8h1v1h-1zM960.8 318.1h1v1h-1zM960.8 295.3h1v1h-1zM960.8 272.6h1v1h-1zM960.8 249.9h1v1h-1zM960.8 227.2h1v1h-1zM960.8 204.4h1v1h-1zM960.8 181.7h1v1h-1zM960.8 159.0h1v1h-1zM983.5 727.2h1v1h-1zM983.5 704.4h1v1h-1zM983.5 681.7h1v1h-1zM983.5 659.0h1v1h-1zM983.5 636.2h1v1h-1zM983.5 613.5h1v1h-1zM983.5 590.8h1v1h-1zM983.5 568.1h1v1h-1zM983.5 545.3h1v1h-1zM983.5 522.6h1v1h-1zM983.5 499.9h1v1h-1zM983.5 477.2h1v1h-1zM983.5 454.4h1v1h-1zM983.5 431.7h1v1h-1zM983.5 409.0h1v1h-1zM983.5 386.2h1v1h-1zM983.5 363.5h1v1h-1zM983.5 340.8h1v1h-1zM983.5 318.1h1v1h-1zM983.5 295.3h1v1h-1zM983.5 272.6h1v1h-1zM983.5 249.9h1v1h-1zM983.5 227.2h1v1h-1zM983.5 204.4h1v1h-1zM983.5 181.7h1v1h-1zM983.5 159.0h1v1h-1zM1006.3 727.2h1v1h-1zM1006.3 704.4h1v1h-1zM1006.3 681.7h1v1h-1zM1006.3 659.0h1v1h-1zM1006.3 636.2h1v1h-1zM1006.3 613.5h1v1h-1zM1006.3 590.8h1v1h-1zM1006.3 568.1h1v1h-1zM1006.3 545.3h1v1h-1zM1006.3 522.6h1v1h-1zM1006.3 499.9h1v1h-1zM1006.3 477.2h1v1h-1zM1006.3 454.4h1v1h-1zM1006.3 431.7h1v1h-1zM1006.3 409.0h1v1h-1zM1006.3 386.2h1v1h-1zM1006.3 363.5h1v1h-1zM1006.3 340.8h1v1h-1zM1006.3 318.1h1v1h-1zM1006.3 295.3h1v1h-1zM1006.3 272.6h1v1h-1zM1006.3 249.9h1v1h-1zM1006.3 227.2h1v1h-1zM1006.3 204.4h1v1h-1zM1006.3 181.7h1v1h-1zM1006.3 159.0h1v1h-1zM1029.0 727.2h1v1h-1zM1029.0 704.4h1v1h-1zM1029.0 681.7h1v1h-1zM1029.0 659.0h1v1h-1zM1029.0 636.2h1v1h-1zM1029.0 613.5h1v1h-1zM1029.0 590.8h1v1h-1zM1029.0 568.1h1v1h-1zM1029.0 545.3h1v1h-1zM1029.0 522.6h1v1h-1zM1029.0 499.9h1v1h-1zM1029.0 477.2h1v1h-1zM1029.0 454.4h1v1h-1zM1029.0 431.7h1v1h-1zM1029.0 409.0h1v1h-1zM1029.0 386.2h1v1h-1zM1029.0 363.5h1v1h-1zM1029.0 340.8h1v1h-1zM1029.0 318.1h1v1h-1zM1029.0 295.3h1v1h-1zM1029.0 272.6h1v1h-1zM1029.0 249.9h1v1h-1zM1029.0 227.2h1v1h-1zM1029.0 204.4h1v1h-1zM1029.0 181.7h1v1h-1zM1029.0 159.0h1v1h-1zM1051.7 727.2h1v1h-1zM1051.7 704.4h1v1h-1zM1051.7 681.7h1v1h-1zM1051.7 659.0h1v1h-1zM1051.7 636.2h1v1h-1zM1051.7 613.5h1v1h-1zM1051.7 590.8h1v1h-1zM1051.7 568.1h1v1h-1zM1051.7 545.3h1v1h-1zM1051.7 522.6h1v1h-1zM1051.7 499.9h1v1h-1zM1051.7 477.2h1v1h-1zM1051.7 454.4h1v1h-1zM1051.7 431.7h1v1h-1zM1051.7 409.0h1v1h-1zM1051.7 386.2h1v1h-1zM1051.7 363.5h1v1h-1zM1051.7 340.8h1v1h-1zM1051.7 318.1h1v1h-1zM1051.7 295.3h1v1h-1zM1051.7 272.6h1v1h-1zM1051.7 249.9h1v1h-1zM1051.7 227.2h1v1h-1zM1051.7 204.4h1v1h-1zM1051.7 181.7h1v1h-1zM1051.7 159.0h1v1h-1zM1074.4 727.2h1v1h-1zM1074.4 704.4h1v1h-1zM1074.4 681.7h1v1h-1zM1074.4 659.0h1v1h-1zM1074.4 636.2h1v1h-1zM1074.4 613.5h1v1h-1zM1074.4 590.8h1v1h-1zM1074.4 568.1h1v1h-1zM1074.4 545.3h1v1h-1zM1074.4 522.6h1v1h-1zM1074.4 499.9h1v1h-1zM1074.4 477.2h1v1h-1zM1074.4 454.4h1v1h-1zM1074.4 431.7h1v1h-1zM1074.4 409.0h1v1h-1zM1074.4 386.2h1v1h-1zM1074.4 363.5h1v1h-1zM1074.4 340.8h1v1h-1zM1074.4 318.1h1v1h-1zM1074.4 295.3h1v1h-1zM1074.4 272.6h1v1h-1zM1074.4 249.9h1v1h-1zM1074.4 227.2h1v1h-1zM1074.4 204.4h1v1h-1zM1074.4 181.7h1v1h-1zM1074.4 159.0h1v1h-1zM1097.2 727.2h1v1h-1zM1097.2 704.4h1v1h-1zM1097.2 681.7h1v1h-1zM1097.2 659.0h1v1h-1zM1097.2 636.2h1v1h-1zM1097.2 613.5h1v1h-1zM1097.2 590.8h1v1h-1zM1097.2 568.1h1v1h-1zM1097.2 545.3h1v1h-1zM1097.2 522.6h1v1h-1zM1097.2 499.9h1v1h-1zM1097.2 477.2h1v1h-1zM1097.2 454.4h1v1h-1zM1097.2 431.7h1v1h-1zM1097.2 409.0h1v1h-1zM1097.2 386.2h1v1h-1zM1097.2 363.5h1v1h-1zM1097.2 340.8h1v1h-1zM1097.2 318.1h1v1h-1zM1097.2 295.3h1v1h-1zM1097.2 272.6h1v1h-1zM1097.2 249.9h1v1h-1zM1097.2 227.2h1v1h-1zM1097.2 204.4h1v1h-1zM1097.2 181.7h1v1h-1zM1097.2 159.0h1v1h-1zM1119.9 727.2h1v1h-1zM1119.9 704.4h1v1h-1zM1119.9 681.7h1v1h-1zM1119.9 659.0h1v1h-1zM1119.9 636.2h1v1h-1zM1119.9 613.5h1v1h-1zM1119.9 590.8h1v1h-1zM1119.9 568.1h1v1h-1zM1119.9 545.3h1v1h-1zM1119.9 522.6h1v1h-1zM1119.9 499.9h1v1h-1zM1119.9 477.2h1v1h-1zM1119.9 454.4h1v1h-1zM1119.9 431.7h1v1h-1zM1119.9 409.0h1v1h-1zM1119.9 386.2h1v1h-1zM1119.9 363.5h1v1h-1zM1119.9 340.8h1v1h-1zM1119.9 318.1h1v1h-1zM1119.9 295.3h1v1h-1zM1119.9 272.6h1v1h-1zM1119.9 249.9h1v1h-1zM1119.9 227.2h1v1h-1zM1119.9 204.4h1v1h-1zM1119.9 181.7h1v1h-1zM1119.9 159.0h1v1h-1z" fill="#e2e2e2"/>
<rect x="955" y="214.5" width="9" height="476.5" fill="#808080"/>
<rect x="289" y="682.5" width="675" height="8.5" fill="#808080"/>
<rect x="280.7" y="205.7" width="272.3" height="476.3" fill="#ffffff"/>
<rect x="280.7" y="205.7" width="672.3" height="476.3" fill="#ffffff" stroke="#c4c4c4" stroke-width="0.8"/>
<path d="M279.5 155V732M506.8 155V732M734.0 155V732M961.3 155V732M95 682.2H1139M95 454.9H1139M95 227.7H1139" stroke="#000" stroke-opacity="0.045" stroke-width="1" fill="none"/>
<path d="M331.6 740V214.4H773.3V740" stroke="#505050" stroke-width="1" fill="none"/>
<rect x="302.3" y="227.5" width="629.4" height="431.5" stroke="#7c7cf4" stroke-opacity="0.55" stroke-width="3" fill="none"/><rect x="302.3" y="227.5" width="629.4" height="431.5" stroke="#38389a" stroke-width="1.7" fill="none"/>
<path d="M417.3 720.8L378.7 480.7L442.2 430.9L437.3 423.2L471.4 395.4L477.1 401.7L530 358.6L530 308.2A29.75 29.75 0 0 1 589.5 308.2L589.5 358.6L641.8 401.7L648.1 395.4L682.2 423.2L677.3 430.9L740.8 480.7L701.6 720.8Q700.5 723.5 697.7 723.5L627.5 723.5L627.5 740M417.3 720.8Q418.5 723.5 421.3 723.5L491.5 723.5L491.5 740M424 731.3H491.5M627.5 731.3H695" stroke="#3a3a3a" stroke-width="1" fill="none"/>
<circle cx="559.5" cy="308.5" r="7" stroke="#3a3a3a" stroke-width="1" fill="none"/>
<path d="M496.2 522.9A64 64 0 1 1 608.7 558.6C603 550 598 544 594.9 539.3C590 532 586 527 583.3 523.3C580 518 577 513 575.3 510C572 504 567 498 562.7 495.6L558.8 493.8L558.8 483.8L559.8 482.4L566.6 477.1L557.7 477.4C555 475 552 472.5 549.9 472.5C547 472 545 471.8 542.8 472.1C539 473 536 474.5 534.2 476.4L530.3 481.7C529 488 528 493 527.1 498.4C526 503 525 506 524.7 510C524.5 516 525.5 521 527.3 525.1C530 531 533 534 536.2 536.7C541 540 547 543.5 552.2 546L546.4 551.8ZM496.7 529.1L588.7 575.3L604.7 563.3L593.6 553.6L575.3 547.3L566.4 550.4L563.8 559.3M552.2 553.6L555.8 548.2L562 550.9L560.2 558.4ZM496.7 529.1A64 64 0 0 0 578 578.9" stroke="#3a3a3a" stroke-width="1" fill="none"/>
<path d="M545.3 577.6H931.7M545.3 591.6H931.7M545.3 613.6H931.7M715.3 636.4H931.7M545.3 577.6V659M579.3 577.6V591.6M618.4 577.6V613.6M817.3 577.6V591.6M674.4 591.6V613.6M761.3 591.6V613.6M818.1 591.6V613.6M886.7 591.6V613.6M715.3 613.6V659M852.5 636.4V659M886.7 636.4V659" stroke="#3a3a3a" stroke-width="1" fill="none"/>
<text x="548.5" y="586.5" font-size="5.7" text-anchor="start" fill="#111" font-family="Liberation Sans">Item ref</text>
<text x="583" y="586.5" font-size="5.7" text-anchor="start" fill="#111" font-family="Liberation Sans">Quantity</text>
<text x="622" y="586.5" font-size="5.7" text-anchor="start" fill="#111" font-family="Liberation Sans">Title/Name, destination, material, dimension etc</text>
<text x="821" y="586.5" font-size="5.7" text-anchor="start" fill="#111" font-family="Liberation Sans">Article No./Reference</text>
<text x="548.5" y="598.5" font-size="5.7" text-anchor="start" fill="#111" font-family="Liberation Sans">Designed by</text>
<text x="622" y="598.5" font-size="5.7" text-anchor="start" fill="#111" font-family="Liberation Sans">Checked by</text>
<text x="689" y="598.5" font-size="5.7" text-anchor="start" fill="#111" font-family="Liberation Sans">Approved by - date</text>
<text x="767.5" y="598.5" font-size="5.7" text-anchor="start" fill="#111" font-family="Liberation Sans">Filename</text>
<text x="811.5" y="609" font-size="6.4" text-anchor="end" fill="#111" font-family="Liberation Sans">file.dxf</text>
<text x="821.5" y="598.5" font-size="5.7" text-anchor="start" fill="#111" font-family="Liberation Sans">Date</text>
<text x="879.5" y="609.5" font-size="9.5" text-anchor="end" fill="#111" font-family="Liberation Sans">01/01/2025</text>
<text x="890.5" y="598.5" font-size="5.7" text-anchor="start" fill="#111" font-family="Liberation Sans">Scale</text>
<text x="925.5" y="609.5" font-size="9.5" text-anchor="end" fill="#111" font-family="Liberation Sans">1:1</text>
<text x="723" y="632" font-size="15" text-anchor="start" fill="#111" font-family="Liberation Sans">Title</text>
<text x="856" y="644.5" font-size="5.7" text-anchor="start" fill="#111" font-family="Liberation Sans">Edition</text>
<text x="891" y="644.5" font-size="5.7" text-anchor="start" fill="#111" font-family="Liberation Sans">Sheet</text>
<text x="925.5" y="655" font-size="9.5" text-anchor="end" fill="#111" font-family="Liberation Sans">1/1</text>
<path d="M513.7 308.5H605M467 518H652M559.5 232V740" stroke="#ee5a5a" stroke-width="0.9" stroke-dasharray="10 3.5 1.5 3.5" fill="none"/>
<path d="M552.4 155V732M95 522.8H1139" stroke="#f9d992" stroke-width="1.7" stroke-dasharray="4 2" fill="none"/>
<circle cx="557.1" cy="524.7" r="40.5" fill="url(#glow)"/>
<circle cx="552.4" cy="522.8" r="4" stroke="#f0c860" stroke-width="1" fill="none" opacity="0.8"/>
<path d="M556.8 509.8V540.3M541.4 524.7H572.4" stroke="#a0a0a0" stroke-width="1.6" fill="none"/>
<text x="560.4" y="541" font-size="14" text-anchor="start" fill="#f0b428" font-family="Liberation Sans">Grid</text>
<path d="M259 682H300M279.5 661.7V702" stroke="#e86060" stroke-width="1" fill="none"/>
</svg>
<div class="a" style="left:95px;top:132px;width:1046px;height:23px;overflow:hidden">
<div class="rl" style="left:-12.32px;top:1px">-80</div>
<div class="rl" style="left:10.41px;top:1px">-70</div>
<div class="rl" style="left:33.14px;top:1px">-60</div>
<div class="rl" style="left:55.87px;top:1px">-50</div>
<div class="rl" style="left:78.59px;top:1px">-40</div>
<div class="rl" style="left:101.32px;top:1px">-30</div>
<div class="rl" style="left:124.05px;top:1px">-20</div>
<div class="rl" style="left:146.77px;top:1px">-10</div>
<div class="rl" style="left:169.50px;top:1px">0</div>
<div class="rl" style="left:192.23px;top:1px">10</div>
<div class="rl" style="left:214.95px;top:1px">20</div>
<div class="rl" style="left:237.68px;top:1px">30</div>
<div class="rl" style="left:260.41px;top:1px">40</div>
<div class="rl" style="left:283.13px;top:1px">50</div>
<div class="rl" style="left:305.86px;top:1px">60</div>
<div class="rl" style="left:328.59px;top:1px">70</div>
<div class="rl" style="left:351.32px;top:1px">80</div>
<div class="rl" style="left:374.04px;top:1px">90</div>
<div class="rl" style="left:396.77px;top:1px">100</div>
<div class="rl" style="left:419.50px;top:1px">110</div>
<div class="rl" style="left:442.22px;top:1px">120</div>
<div class="rl" style="left:464.95px;top:1px">130</div>
<div class="rl" style="left:487.68px;top:1px">140</div>
<div class="rl" style="left:510.40px;top:1px">150</div>
<div class="rl" style="left:533.13px;top:1px">160</div>
<div class="rl" style="left:555.86px;top:1px">170</div>
<div class="rl" style="left:578.59px;top:1px">180</div>
<div class="rl" style="left:601.31px;top:1px">190</div>
<div class="rl" style="left:624.04px;top:1px">200</div>
<div class="rl" style="left:646.77px;top:1px">210</div>
<div class="rl" style="left:669.49px;top:1px">220</div>
<div class="rl" style="left:692.22px;top:1px">230</div>
<div class="rl" style="left:714.95px;top:1px">240</div>
<div class="rl" style="left:737.67px;top:1px">250</div>
<div class="rl" style="left:760.40px;top:1px">260</div>
<div class="rl" style="left:783.13px;top:1px">270</div>
<div class="rl" style="left:805.86px;top:1px">280</div>
<div class="rl" style="left:828.58px;top:1px">290</div>
<div class="rl" style="left:851.31px;top:1px">300</div>
<div class="rl" style="left:874.04px;top:1px">310</div>
<div class="rl" style="left:896.76px;top:1px">320</div>
<div class="rl" style="left:919.49px;top:1px">330</div>
<div class="rl" style="left:942.22px;top:1px">340</div>
<div class="rl" style="left:964.94px;top:1px">350</div>
<div class="rl" style="left:987.67px;top:1px">360</div>
<div class="rl" style="left:1010.40px;top:1px">370</div>
<div class="rl" style="left:1033.13px;top:1px">380</div>
</div>
<svg style="left:0;top:0" width="1500" height="844"><path d="M97.7 148V155M120.4 148V155M143.1 148V155M165.9 148V155M188.6 148V155M211.3 148V155M234.0 148V155M256.8 148V155M279.5 148V155M302.2 148V155M325.0 148V155M347.7 148V155M370.4 148V155M393.1 148V155M415.9 148V155M438.6 148V155M461.3 148V155M484.0 148V155M506.8 148V155M529.5 148V155M575.0 148V155M597.7 148V155M620.4 148V155M643.1 148V155M665.9 148V155M688.6 148V155M711.3 148V155M734.0 148V155M756.8 148V155M779.5 148V155M802.2 148V155M824.9 148V155M847.7 148V155M870.4 148V155M893.1 148V155M915.9 148V155M938.6 148V155M961.3 148V155M984.0 148V155M1006.8 148V155M1029.5 148V155M1052.2 148V155M1074.9 148V155M1097.7 148V155M1120.4 148V155" stroke="#555" stroke-width="1" fill="none"/>
<path d="M88 727.7H95M88 704.9H95M88 682.2H95M88 659.5H95M88 636.7H95M88 614.0H95M88 591.3H95M88 568.6H95M88 545.8H95M88 500.4H95M88 477.7H95M88 454.9H95M88 432.2H95M88 409.5H95M88 386.7H95M88 364.0H95M88 341.3H95M88 318.6H95M88 295.8H95M88 273.1H95M88 250.4H95M88 227.7H95M88 204.9H95M88 182.2H95M88 159.5H95" stroke="#555" stroke-width="1" fill="none"/>
<path d="M546.7 145.2H558.1L552.4 150.2Z" fill="#000"/><path d="M552.4 150V155" stroke="#555"/>
<path d="M84.9 516.9V529L91.4 523Z" fill="#000"/><path d="M91 523H95" stroke="#555"/>
</svg>
<div class="a" style="left:72px;top:155px;width:23px;height:577px;overflow:hidden">
<div class="rl" style="top:590.88px;left:-9.20px;transform:rotate(-90deg);transform-origin:15px 4.5px">-30</div>
<div class="rl" style="top:568.15px;left:-9.20px;transform:rotate(-90deg);transform-origin:15px 4.5px">-20</div>
<div class="rl" style="top:545.43px;left:-9.20px;transform:rotate(-90deg);transform-origin:15px 4.5px">-10</div>
<div class="rl" style="top:522.70px;left:-9.20px;transform:rotate(-90deg);transform-origin:15px 4.5px">0</div>
<div class="rl" style="top:499.97px;left:-9.20px;transform:rotate(-90deg);transform-origin:15px 4.5px">10</div>
<div class="rl" style="top:477.25px;left:-9.20px;transform:rotate(-90deg);transform-origin:15px 4.5px">20</div>
<div class="rl" style="top:454.52px;left:-9.20px;transform:rotate(-90deg);transform-origin:15px 4.5px">30</div>
<div class="rl" style="top:431.79px;left:-9.20px;transform:rotate(-90deg);transform-origin:15px 4.5px">40</div>
<div class="rl" style="top:409.07px;left:-9.20px;transform:rotate(-90deg);transform-origin:15px 4.5px">50</div>
<div class="rl" style="top:386.34px;left:-9.20px;transform:rotate(-90deg);transform-origin:15px 4.5px">60</div>
<div class="rl" style="top:363.61px;left:-9.20px;transform:rotate(-90deg);transform-origin:15px 4.5px">70</div>
<div class="rl" style="top:340.88px;left:-9.20px;transform:rotate(-90deg);transform-origin:15px 4.5px">80</div>
<div class="rl" style="top:318.16px;left:-9.20px;transform:rotate(-90deg);transform-origin:15px 4.5px">90</div>
<div class="rl" style="top:295.43px;left:-9.20px;transform:rotate(-90deg);transform-origin:15px 4.5px">100</div>
<div class="rl" style="top:272.70px;left:-9.20px;transform:rotate(-90deg);transform-origin:15px 4.5px">110</div>
<div class="rl" style="top:249.98px;left:-9.20px;transform:rotate(-90deg);transform-origin:15px 4.5px">120</div>
<div class="rl" style="top:227.25px;left:-9.20px;transform:rotate(-90deg);transform-origin:15px 4.5px">130</div>
<div class="rl" style="top:204.52px;left:-9.20px;transform:rotate(-90deg);transform-origin:15px 4.5px">140</div>
<div class="rl" style="top:181.80px;left:-9.20px;transform:rotate(-90deg);transform-origin:15px 4.5px">150</div>
<div class="rl" style="top:159.07px;left:-9.20px;transform:rotate(-90deg);transform-origin:15px 4.5px">160</div>
<div class="rl" style="top:136.34px;left:-9.20px;transform:rotate(-90deg);transform-origin:15px 4.5px">170</div>
<div class="rl" style="top:113.61px;left:-9.20px;transform:rotate(-90deg);transform-origin:15px 4.5px">180</div>
<div class="rl" style="top:90.89px;left:-9.20px;transform:rotate(-90deg);transform-origin:15px 4.5px">190</div>
<div class="rl" style="top:68.16px;left:-9.20px;transform:rotate(-90deg);transform-origin:15px 4.5px">200</div>
<div class="rl" style="top:45.43px;left:-9.20px;transform:rotate(-90deg);transform-origin:15px 4.5px">210</div>
<div class="rl" style="top:22.71px;left:-9.20px;transform:rotate(-90deg);transform-origin:15px 4.5px">220</div>
<div class="rl" style="top:-0.02px;left:-9.20px;transform:rotate(-90deg);transform-origin:15px 4.5px">230</div>
</div>
<svg style="left:0;top:0" width="1500" height="107">
<defs>
<linearGradient id="gPaper" x1="0" y1="0" x2="1" y2="1"><stop offset="0" stop-color="#fdfdfd"/><stop offset="1" stop-color="#e2e2e2"/></linearGradient>
<linearGradient id="gBtn" x1="0" y1="0" x2="0" y2="1"><stop offset="0" stop-color="#f6f6f6"/><stop offset="0.5" stop-color="#e6e6e6"/><stop offset="1" stop-color="#f4f4f4"/></linearGradient>
<radialGradient id="gLens" cx="0.5" cy="0.35" r="0.6"><stop offset="0" stop-color="#cfe0f4"/><stop offset="0.55" stop-color="#7ea8dc"/><stop offset="1" stop-color="#4d84cc"/></radialGradient>
<radialGradient id="gLensR" cx="0.5" cy="0.35" r="0.6"><stop offset="0" stop-color="#e8eef4"/><stop offset="1" stop-color="#b8c8d8"/></radialGradient>
<linearGradient id="gSpec" x1="0" y1="0" x2="1" y2="0"><stop offset="0" stop-color="#ff2000"/><stop offset="0.17" stop-color="#ffe000"/><stop offset="0.33" stop-color="#40ff00"/><stop offset="0.5" stop-color="#00e0e0"/><stop offset="0.67" stop-color="#0050ff"/><stop offset="0.83" stop-color="#ff00c0"/><stop offset="1" stop-color="#ff0040"/></linearGradient>
<linearGradient id="gGrey" x1="0" y1="0" x2="1" y2="0"><stop offset="0" stop-color="#ffffff"/><stop offset="1" stop-color="#000000"/></linearGradient>
<linearGradient id="gGreen" x1="0" y1="0" x2="1" y2="1"><stop offset="0" stop-color="#8ad870"/><stop offset="1" stop-color="#2a9a30"/></linearGradient>
<linearGradient id="gFloppy" x1="0" y1="0" x2="0" y2="1"><stop offset="0" stop-color="#7fb2ff"/><stop offset="1" stop-color="#3a78f0"/></linearGradient>
</defs>
<rect x="7" y="32" width="2" height="2" fill="#8c8c8c"/><rect x="7" y="38" width="2" height="2" fill="#8c8c8c"/><rect x="7" y="44" width="2" height="2" fill="#8c8c8c"/><rect x="7" y="50" width="2" height="2" fill="#8c8c8c"/><rect x="7" y="56" width="2" height="2" fill="#8c8c8c"/>
<rect x="87" y="32" width="2" height="2" fill="#8c8c8c"/><rect x="87" y="38" width="2" height="2" fill="#8c8c8c"/><rect x="87" y="44" width="2" height="2" fill="#8c8c8c"/><rect x="87" y="50" width="2" height="2" fill="#8c8c8c"/><rect x="87" y="56" width="2" height="2" fill="#8c8c8c"/>
<rect x="403" y="32" width="2" height="2" fill="#8c8c8c"/><rect x="403" y="38" width="2" height="2" fill="#8c8c8c"/><rect x="403" y="44" width="2" height="2" fill="#8c8c8c"/><rect x="403" y="50" width="2" height="2" fill="#8c8c8c"/><rect x="403" y="56" width="2" height="2" fill="#8c8c8c"/>
<rect x="708" y="32" width="2" height="2" fill="#8c8c8c"/><rect x="708" y="38" width="2" height="2" fill="#8c8c8c"/><rect x="708" y="44" width="2" height="2" fill="#8c8c8c"/><rect x="708" y="50" width="2" height="2" fill="#8c8c8c"/><rect x="708" y="56" width="2" height="2" fill="#8c8c8c"/>
<path d="M186.5 26V67" stroke="#7a7a7a" stroke-width="1" stroke-dasharray="1 2"/>
<path d="M288.5 26V67" stroke="#7a7a7a" stroke-width="1" stroke-dasharray="1 2"/>
<path d="M344.5 26V67" stroke="#7a7a7a" stroke-width="1" stroke-dasharray="1 2"/>
<path d="M502.5 26V67" stroke="#7a7a7a" stroke-width="1" stroke-dasharray="1 2"/>
<path d="M558.5 26V67" stroke="#7a7a7a" stroke-width="1" stroke-dasharray="1 2"/>
<path d="M854.5 26V67" stroke="#7a7a7a" stroke-width="1" stroke-dasharray="1 2"/>
<path d="M911.5 26V67" stroke="#7a7a7a" stroke-width="1" stroke-dasharray="1 2"/>
<rect x="352" y="25.2" width="43" height="42.6" rx="5" fill="#b9b9b9"/>
<rect x="805" y="25.2" width="43" height="42.6" rx="5" fill="#b9b9b9"/>
<rect x="862" y="25.2" width="43" height="42.6" rx="5" fill="#b9b9b9"/>
<path d="M27.5 35.5L27.5 52.5L31.3 49L34.2 55.6L36.8 54.4L34 48L39 47.6Z" fill="#fff" stroke="#333" stroke-width="1" stroke-linejoin="round"/>
<rect x="100.5" y="32.5" width="24.5" height="27.5" rx="1" fill="url(#gPaper)" stroke="#8a8a8a" stroke-width="1"/>
<circle cx="121" cy="37.5" r="4.5" fill="#f4f000" opacity="0.45"/><circle cx="121" cy="37.5" r="2.5" fill="#f0ec20"/><circle cx="121" cy="37.5" r="1" fill="#ffffc0"/>
<path d="M144 34H156L158 37H168V55H146Z" fill="#9a9a9a" stroke="#777" stroke-width="0.8"/>
<path d="M148.5 32.5H171.5L168 54H146Z" fill="#f4f4f4" stroke="#999" stroke-width="0.8"/>
<path d="M150 43H174.5L170.5 57.5H146Z" fill="#6e9fdc" stroke="#4a7cc0" stroke-width="0.8"/>
<rect x="202.5" y="33.5" width="24" height="25" rx="2.5" fill="url(#gFloppy)" stroke="#2b3fa8" stroke-width="1"/><rect x="206" y="34.5" width="17" height="10.5" fill="#eef2fb"/><rect x="207.5" y="48" width="13" height="9.5" fill="#dfe3ea"/><rect x="209.5" y="50" width="2.2" height="5" fill="#1a3ac0"/>
<rect x="248.5" y="33.5" width="24" height="25" rx="2.5" fill="url(#gFloppy)" stroke="#2b3fa8" stroke-width="1"/><rect x="252" y="34.5" width="17" height="10.5" fill="#eef2fb"/><rect x="253.5" y="48" width="13" height="9.5" fill="#dfe3ea"/><rect x="255.5" y="50" width="2.2" height="5" fill="#1a3ac0"/>
<path d="M268 33L275.5 36.5L265 51.5L259.5 54.5L260 48Z" fill="#f5a623" stroke="#8a4a10" stroke-width="0.8"/><path d="M268 33L275.5 36.5L274 38.5L266.5 35Z" fill="#e05050"/>
<rect x="305.3" y="43" width="23.6" height="14.8" rx="3.2" fill="#000"/>
<rect x="305.5" y="43.2" width="23.2" height="14.5" rx="3" fill="none" stroke="#000" stroke-width="1.2"/><path d="M317.1 44.6L307.90 44.60" stroke="#f5a623" stroke-width="2.2"/><circle cx="307.90" cy="44.60" r="2.5" fill="#f5a623"/><path d="M317.1 44.6L310.59 38.09" stroke="#f5a623" stroke-width="2.2"/><circle cx="310.59" cy="38.09" r="2.5" fill="#f5a623"/><path d="M317.1 44.6L317.10 35.40" stroke="#f5a623" stroke-width="2.2"/><circle cx="317.10" cy="35.40" r="2.5" fill="#f5a623"/><path d="M317.1 44.6L323.61 38.09" stroke="#f5a623" stroke-width="2.2"/><circle cx="323.61" cy="38.09" r="2.5" fill="#f5a623"/><path d="M317.1 44.6L326.30 44.60" stroke="#f5a623" stroke-width="2.2"/><circle cx="326.30" cy="44.60" r="2.5" fill="#f5a623"/><path d="M307 44.3H327.2" stroke="#f5a623" stroke-width="1.6"/>
<text x="317.2" y="55.3" font-size="10" font-weight="bold" text-anchor="middle" fill="#fff" font-family="Liberation Sans" transform="translate(317.2 0) scale(0.85 1) translate(-317.2 0)">SVG</text>
<rect x="370" y="32" width="15" height="13" fill="#f0f0f0" stroke="#aaa" stroke-width="0.8"/>
<path d="M360 47H389V57Q389 59 387 59H362Q360 59 360 57Z" fill="#e6e6e6" stroke="#8c8c8c" stroke-width="1"/>
<path d="M371 46L380 54" stroke="#777" stroke-width="2.5"/>
<circle cx="368.8" cy="41.6" r="6" fill="url(#gLens)" stroke="#ddd" stroke-width="1.5"/>
<path d="M420 40.5Q431 29 440 37Q446 45 437 54Q432 58.5 426 58L427.5 55Q433 55 436.5 50Q440 44 435 40.5Q429 37 424.5 44L430 47.5L414.5 51.5L415.5 36Z" fill="url(#gGreen)" stroke="#1d8a2a" stroke-width="0.8"/>
<path d="M484 40.5Q473 29 464 37Q458 45 467 54Q472 58.5 478 58L476.5 55Q471 55 467.5 50Q464 44 469 40.5Q475 37 479.5 44L474 47.5L489.5 51.5L488.5 36Z" fill="#a8d8a8" stroke="#80c088" stroke-width="0.8"/>
<path d="M537.5 34L543 39L529 54L523.5 49Z" fill="#d86b6b" stroke="#b06868" stroke-width="0.6"/><path d="M539.3 35.5L541 37.3L527.5 51.5L525.8 49.7Z" fill="#f2f2f2"/>
<path d="M523.5 49L529 54L526 57L520.5 52Z" fill="#f0f0f0" stroke="#999" stroke-width="0.6"/>
<ellipse cx="533" cy="57.5" rx="10" ry="1.2" fill="#c8c8c8" opacity="0.7"/>
<path d="M588 31L590 31L588 44M600 38L601 40L589 46" stroke="#999" stroke-width="1.2" fill="#f4f4f4"/>
<path d="M588 31Q587 38 586.5 45L590 44Z" fill="#f6f6f6" stroke="#888" stroke-width="0.6"/><path d="M600.5 37.8L589 44.5L590 46.5L601 40Z" fill="#f6f6f6" stroke="#888" stroke-width="0.6"/>
<ellipse cx="578.5" cy="48" rx="4.5" ry="3.3" fill="none" stroke="#e48888" stroke-width="1.8" transform="rotate(-20 578.5 48)"/>
<ellipse cx="588.5" cy="55" rx="3.2" ry="5" fill="none" stroke="#e48888" stroke-width="1.8"/>
<path d="M582 47.5L586 45.5M587.5 50V47" stroke="#e48888" stroke-width="1.8"/>
<path d="M573.5 57.5H579M576.2 54.8V60.2" stroke="#333" stroke-width="1"/>
<path d="M618.5 31H638.5L639.5 32V50H618.5Z" fill="#f4f4f4" stroke="#c8c8c8" stroke-width="0.8"/>
<path d="M626.5 36.5H647.5V57.5L644 61H626.5Z" fill="#f2f2f2" stroke="#b8b8b8" stroke-width="0.8"/><path d="M629 43H645M629 46H645M629 48.5H642M629 51H645" stroke="#d0d0d0" stroke-width="0.8"/>
<path d="M620 57H626M623 54V60" stroke="#333" stroke-width="1"/>
<rect x="666" y="33" width="26" height="27.5" rx="1.5" fill="#c88420" stroke="#8a5a10" stroke-width="0.8"/><rect x="668.5" y="35.5" width="21" height="23" fill="#f8f8f8"/>
<rect x="672.5" y="30" width="13" height="5.5" rx="1.5" fill="#8c8c80" stroke="#666" stroke-width="0.6"/>
<path d="M671.5 40H686M671.5 43H686M671.5 45.5H684M671.5 48H686M671.5 51H680" stroke="#c8c8c8" stroke-width="0.8"/><path d="M683.5 58.5L689.5 52.5V58.5Z" fill="#aaa"/>
<path d="M741.5 35.5Q744.5 36.5 744 39.5L729.5 54L724 56L725.5 50.5Z" fill="#d83a20" stroke="#7a3a10" stroke-width="0.8"/><path d="M725.5 50.5L724 56L729.5 54Z" fill="#f0c8a0"/><path d="M723 56.5H745" stroke="#ff2020" stroke-width="1.2"/><path d="M737.5 37.5L742 42" stroke="#d0d0d0" stroke-width="1.5"/>
<rect x="765.5" y="35.5" width="29" height="21.7" rx="1" fill="#000080" stroke="#333" stroke-width="0.6"/><path d="M769.5 53.8L790.5 38.8V53.8Z" fill="none" stroke="#fff" stroke-width="1.2" stroke-dasharray="2 1.2"/>
<circle cx="825.9" cy="46" r="13" fill="none" stroke="#000" stroke-width="2"/><path d="M812 59.5L840 32" stroke="#1a3af0" stroke-width="1.1"/>
<rect x="869.8" y="33" width="2" height="2" fill="#000"/>
<rect x="869.8" y="41" width="2" height="2" fill="#000"/>
<rect x="869.8" y="49" width="2" height="2" fill="#000"/>
<rect x="869.8" y="57" width="2" height="2" fill="#000"/>
<rect x="877.8" y="33" width="2" height="2" fill="#000"/>
<rect x="877.8" y="41" width="2" height="2" fill="#000"/>
<rect x="877.8" y="49" width="2" height="2" fill="#000"/>
<rect x="877.8" y="57" width="2" height="2" fill="#000"/>
<rect x="885.8" y="33" width="2" height="2" fill="#000"/>
<rect x="885.8" y="41" width="2" height="2" fill="#000"/>
<rect x="885.8" y="49" width="2" height="2" fill="#000"/>
<rect x="885.8" y="57" width="2" height="2" fill="#000"/>
<rect x="893.8" y="33" width="2" height="2" fill="#000"/>
<rect x="893.8" y="41" width="2" height="2" fill="#000"/>
<rect x="893.8" y="49" width="2" height="2" fill="#000"/>
<rect x="893.8" y="57" width="2" height="2" fill="#000"/>
<path d="M942.2 48L951.2 57" stroke="#6a6a6a" stroke-width="3.2" stroke-linecap="round"/><circle cx="936.2" cy="42" r="10.2" fill="url(#gLens)" stroke="#e8e8e0" stroke-width="1.8"/><circle cx="936.2" cy="42" r="11.3" fill="none" stroke="#b8b8a8" stroke-width="0.6"/><path d="M930.5 42H941.9M936.2 36.3V47.7" stroke="#fff" stroke-width="2.8"/>
<path d="M988.3 48L997.3 57" stroke="#6a6a6a" stroke-width="3.2" stroke-linecap="round"/><circle cx="982.3" cy="42" r="10.2" fill="url(#gLens)" stroke="#e8e8e0" stroke-width="1.8"/><circle cx="982.3" cy="42" r="11.3" fill="none" stroke="#b8b8a8" stroke-width="0.6"/><path d="M976.3 42H988.3" stroke="#fff" stroke-width="2.8"/>
<path d="M1034 48L1043 57" stroke="#6a6a6a" stroke-width="3.2" stroke-linecap="round"/><circle cx="1028" cy="42" r="10.2" fill="url(#gLens)" stroke="#e8e8e0" stroke-width="1.8"/><circle cx="1028" cy="42" r="11.3" fill="none" stroke="#b8b8a8" stroke-width="0.6"/><path d="M1022 39V36H1025M1031 36H1034V39M1034 45V48H1031M1025 48H1022V45" stroke="#fff" stroke-width="1.6" fill="none"/>
<path d="M1079.9 48L1088.9 57" stroke="#6a6a6a" stroke-width="3.2" stroke-linecap="round"/><circle cx="1073.9" cy="42" r="10.2" fill="url(#gLensR)" stroke="#e8e8e0" stroke-width="1.8"/><circle cx="1073.9" cy="42" r="11.3" fill="none" stroke="#b8b8a8" stroke-width="0.6"/><path d="M1067.9 39V36H1070.9M1076.9 36H1079.9V39M1079.9 45V48H1076.9M1070.9 48H1067.9V45" stroke="#e85050" stroke-width="1.6" fill="none"/>
<path d="M1126 48L1135 57" stroke="#6a6a6a" stroke-width="3.2" stroke-linecap="round"/><circle cx="1120" cy="42" r="10.2" fill="url(#gLens)" stroke="#e8e8e0" stroke-width="1.8"/><circle cx="1120" cy="42" r="11.3" fill="none" stroke="#b8b8a8" stroke-width="0.6"/><path d="M1127 42H1118M1121.5 37.5L1114 42L1121.5 46.5Z" stroke="#fff" stroke-width="2.4" fill="#fff" stroke-linejoin="round"/>
<rect x="1154.5" y="31" width="27" height="16.6" fill="#fff" stroke="#6a8ed0" stroke-width="1"/>
<path d="M1174 51.2L1183 60.2" stroke="#6a6a6a" stroke-width="3.2" stroke-linecap="round"/><circle cx="1168" cy="45.2" r="10.2" fill="url(#gLens)" stroke="#e8e8e0" stroke-width="1.8"/><circle cx="1168" cy="45.2" r="11.3" fill="none" stroke="#b8b8a8" stroke-width="0.6"/>
<path d="M1219.6 48.8L1228.6 57.8" stroke="#6a6a6a" stroke-width="3.2" stroke-linecap="round"/><circle cx="1213.6" cy="42.8" r="10.2" fill="url(#gLens)" stroke="#e8e8e0" stroke-width="1.8"/><circle cx="1213.6" cy="42.8" r="11.3" fill="none" stroke="#b8b8a8" stroke-width="0.6"/><path d="M1213.6 32V53.6M1202.8 42.8H1224.4" stroke="#fff" stroke-width="1.8"/><path d="M1213.6 31L1210.6 35H1216.6ZM1213.6 54.6L1210.6 50.6H1216.6ZM1201.8 42.8L1205.8 39.8V45.8ZM1225.4 42.8L1221.4 39.8V45.8Z" fill="#fff" stroke="#5a8ad0" stroke-width="0.5"/>
<rect x="7" y="77" width="2" height="2" fill="#8c8c8c"/>
<rect x="7" y="83" width="2" height="2" fill="#8c8c8c"/>
<rect x="7" y="89" width="2" height="2" fill="#8c8c8c"/>
<rect x="7" y="95" width="2" height="2" fill="#8c8c8c"/>
<path d="M67.5 71V106" stroke="#7a7a7a" stroke-width="1" stroke-dasharray="1 2"/>
<path d="M215.5 71V106" stroke="#7a7a7a" stroke-width="1" stroke-dasharray="1 2"/>
<path d="M409.5 71V106" stroke="#7a7a7a" stroke-width="1" stroke-dasharray="1 2"/>
<path d="M512.5 71V106" stroke="#7a7a7a" stroke-width="1" stroke-dasharray="1 2"/>
<path d="M660.5 71V106" stroke="#7a7a7a" stroke-width="1" stroke-dasharray="1 2"/>
<path d="M809.5 71V106" stroke="#7a7a7a" stroke-width="1" stroke-dasharray="1 2"/>
<path d="M865.5 71V106" stroke="#7a7a7a" stroke-width="1" stroke-dasharray="1 2"/>
<path d="M968.5 71V106" stroke="#7a7a7a" stroke-width="1" stroke-dasharray="1 2"/>
<path d="M1024.5 71V106" stroke="#7a7a7a" stroke-width="1" stroke-dasharray="1 2"/>
<path d="M1034.5 71V106" stroke="#7a7a7a" stroke-width="1" stroke-dasharray="1 2"/>
<path d="M1216.5 71V106" stroke="#7a7a7a" stroke-width="1" stroke-dasharray="1 2"/>
<path d="M1405.5 71V106" stroke="#7a7a7a" stroke-width="1" stroke-dasharray="1 2"/>
<rect x="463" y="70.3" width="42.69999999999999" height="36.7" rx="5" fill="#b9b9b9"/>
<rect x="668" y="70.3" width="42.700000000000045" height="36.7" rx="5" fill="#b9b9b9"/>
<rect x="873.2" y="70.3" width="42.799999999999955" height="36.7" rx="5" fill="#b9b9b9"/>
<rect x="15.4" y="73.4" width="42.1" height="29.8" rx="5.5" fill="url(#gBtn)" stroke="#8a8a8a" stroke-width="1.8"/>
<rect x="26" y="78" width="20" height="20" fill="#fff" stroke="#000" stroke-width="1.8"/><rect x="28.5" y="80.5" width="15" height="15" fill="#fff" stroke="#c8c8c8" stroke-width="1"/>
<rect x="86.6" y="78.4" width="19" height="19" rx="2.5" fill="#e7875a" stroke="#e03a22" stroke-width="1.4"/><path d="M91 82.8L101.2 93M101.2 82.8L91 93" stroke="#fff" stroke-width="2.4"/>
<rect x="134" y="75.5" width="16.5" height="11" fill="#ececec" stroke="#b0b0b0" stroke-width="0.8"/><path d="M142.2 77.5L139 81H141V85H143.4V81H145.4Z" fill="#9a9a9a"/>
<path d="M129.5 86H154.5V97Q154.5 100 151.5 100H132.5Q129.5 100 129.5 97Z" fill="#e4e4e4" stroke="#8a8a8a" stroke-width="1"/><path d="M131.5 91H152.5" stroke="#b0b0b0" stroke-width="0.8"/>
<path d="M179.5 73.2H197L201.5 77.7V102.6H179.5Z" fill="#f8f8f8" stroke="#d0d0d0" stroke-width="0.6"/><path d="M197 73.2V77.7H201.5" fill="#e0e0e0"/>
<rect x="174" y="86.8" width="24" height="10.2" fill="#b00010"/>
<text x="186" y="95.6" font-size="8.4" font-weight="bold" text-anchor="middle" fill="#fff" font-family="Liberation Sans">PDF</text>
<rect x="232" y="76" width="15" height="20.4" rx="1" fill="#ececec" stroke="#8a8a8a" stroke-width="1"/>
<path d="M239.5 93Q237 89 238 87.5Q239.5 86.5 241 89L241.5 83Q242 81.5 243.5 82L244 86V82Q245 80.5 246.5 81.5L247 86V83Q248 81.5 249.5 82.5L250 87V85Q251.5 84 252.5 85.5L252.5 92Q252 97 249 100.5H243Z" fill="#fff" stroke="#777" stroke-width="0.9"/>
<rect x="278.5" y="74.5" width="23.5" height="27" rx="1" fill="#f2f2f2" stroke="#777" stroke-width="1"/><rect x="283" y="79.3" width="14.5" height="17.5" fill="none" stroke="#ff2020" stroke-width="1.2"/>
<rect x="324" y="74" width="24" height="27.7" fill="#f4b0b0"/><path d="M336 74V101.7M324 88H348" stroke="#c08080" stroke-width="1"/><rect x="328.5" y="79" width="15" height="17.8" fill="none" stroke="#1010f0" stroke-width="1.4"/>
<rect x="370.4" y="74.5" width="23.5" height="27" rx="1" fill="#f2f2f2" stroke="#777" stroke-width="1"/><rect x="377.8" y="81.8" width="8.8" height="12.8" rx="1.5" fill="#fff" stroke="#6060f0" stroke-width="1.8"/>
<path d="M380 77H384.4L382.2 79.5ZM380 99H384.4L382.2 96.5ZM373.3 86V90.4L375.8 88.2ZM391.2 86V90.4L388.7 88.2Z" fill="#ff1010"/>
<rect x="428.5" y="75.5" width="19" height="25" rx="1.2" fill="url(#gPaper)" stroke="#777" stroke-width="1"/><circle cx="431.5" cy="83.5" r="0.6" fill="#555"/><circle cx="431.5" cy="91.5" r="0.6" fill="#555"/>
<rect x="472.4" y="79.5" width="24.5" height="18" rx="1.2" fill="url(#gPaper)" stroke="#777" stroke-width="1"/><circle cx="480.5" cy="82.5" r="0.6" fill="#555"/><circle cx="488.5" cy="82.5" r="0.6" fill="#555"/>
<rect x="529.5" y="75.5" width="22" height="25.5" rx="1.2" fill="url(#gPaper)" stroke="#6a6a6a" stroke-width="1"/>
<text x="540.5" y="95.2" font-size="16" text-anchor="middle" fill="#333" font-family="Liberation Sans">1</text>
<rect x="575.5" y="74.8" width="23" height="26.4" rx="1" fill="url(#gPaper)" stroke="#c8c8c8" stroke-width="1"/><path d="M583.3 74.8V101.2M590.6 74.8V101.2M575.5 83.5H598.5M575.5 92.3H598.5" stroke="#777" stroke-width="1"/>
<rect x="619.5" y="74.5" width="27.5" height="17" fill="#f8f8f8" stroke="#777" stroke-width="1"/><path d="M632.5 74.5V91.5" stroke="#777"/>
<path d="M638 94L644.5 100.5" stroke="#6a6a6a" stroke-width="3" stroke-linecap="round"/><circle cx="632.5" cy="88.5" r="8" fill="url(#gLens)" stroke="#e8e8e0" stroke-width="1.5"/><path d="M624.5 88.5H640.5M632.5 80.5V96.5" stroke="#4a78b8" stroke-width="0.6"/>
<rect x="678.2" y="82.3" width="22.5" height="12" fill="url(#gSpec)" stroke="#222" stroke-width="1"/>
<rect x="723.4" y="80.9" width="25.4" height="14" fill="url(#gGrey)" stroke="#333" stroke-width="1"/>
<rect x="769.4" y="80.9" width="25" height="14" fill="#fff" stroke="#444" stroke-width="1"/><rect x="769" y="80.5" width="14" height="14.8" fill="#000"/>
<path d="M825.2 88H850.8" stroke="#777" stroke-width="1.6"/><path d="M833 82H843.5L838.2 88L843.5 94H833L838.2 88Z" fill="#000"/>
<rect x="883.8" y="77.2" width="21" height="22.6" rx="1" fill="url(#gPaper)" stroke="#777" stroke-width="1" stroke-dasharray="20 3 3 3 3 3 40"/><path d="M885 99.5L904 78M886.5 100L905 79" stroke="#666" stroke-width="0.8"/>
<path d="M941.1 74V101.8M927 87.9H955.2" stroke="#9090ff" stroke-width="1.6"/><path d="M941.1 79.8V96M933 87.9H949.2" stroke="#000080" stroke-width="3.6"/>
<rect x="985.8" y="73.8" width="22.5" height="26.4" fill="url(#gPaper)" stroke="#8a8a8a" stroke-width="1"/>
<path d="M992 96L1001.5 86" stroke="#3a6ab8" stroke-width="2.6" stroke-linecap="round"/><path d="M1004 96L994 86" stroke="#8a8a8a" stroke-width="2.2" stroke-linecap="round"/><circle cx="993.5" cy="83.5" r="3" fill="none" stroke="#888" stroke-width="1.2"/><path d="M999 83L1004 79L1007 83L1003 86Z" fill="#333"/>
</svg>
<div class="t" style="left:1050.4px;top:83px;font-size:13px;color:#1e1e1e">Scale:</div>
<div class="a" style="left:1100.7px;top:77.7px;width:108.6px;height:20.3px;background:#fff;border-radius:5px;box-shadow:0 0 0 0.6px #c8ccd4"></div>
<div class="t" style="left:1105px;top:81px;font-size:13px;color:#111">1:1</div>
<div class="a" style="left:1191.3px;top:80px;width:15.7px;height:16px;background:#0a7cff;border-radius:4px"></div>
<div class="t" style="left:1232.3px;top:83px;font-size:13px;color:#1e1e1e">Rotation:</div>
<div class="a" style="left:1299.7px;top:77.7px;width:98.6px;height:20.3px;background:#fff;border-radius:5px;box-shadow:0 0 0 0.6px #c8ccd4"></div>
<div class="t" style="left:1304px;top:81px;font-size:13px;color:#111">0</div>
<div class="a" style="left:1380px;top:80px;width:16px;height:16px;background:#0a7cff;border-radius:4px"></div>
<svg style="left:0;top:0" width="1500" height="107"><path d="M1196 86.5L1199.2 83.5L1202.4 86.5M1196 89.5L1199.2 92.5L1202.4 89.5M1384.8 86.5L1388 83.5L1391.2 86.5M1384.8 89.5L1388 92.5L1391.2 89.5" stroke="#fff" stroke-width="1.3" fill="none"/></svg>
<svg style="left:0;top:107px" width="72" height="691" viewBox="0 107 72 691">
<defs><linearGradient id="lb" x1="0" y1="0" x2="0" y2="1"><stop offset="0" stop-color="#f6f6f6"/><stop offset="0.45" stop-color="#ebebeb"/><stop offset="1" stop-color="#f3f3f3"/></linearGradient>
<linearGradient id="lp" x1="0" y1="0" x2="0" y2="1"><stop offset="0" stop-color="#cfcfcf"/><stop offset="1" stop-color="#c4c4c4"/></linearGradient>
<g id="cp"><circle cx="0" cy="0" r="3.3" fill="none" stroke="#ff2020" stroke-width="1"/><path d="M-3.3 0H3.3M0 -3.3V3.3" stroke="#ff2020" stroke-width="0.9"/></g></defs>
<rect x="7" y="116" width="1.8" height="1.8" fill="#9a9a9a"/>
<rect x="13" y="116" width="1.8" height="1.8" fill="#9a9a9a"/>
<rect x="19" y="116" width="1.8" height="1.8" fill="#9a9a9a"/>
<rect x="25" y="116" width="1.8" height="1.8" fill="#9a9a9a"/>
<rect x="31" y="116" width="1.8" height="1.8" fill="#9a9a9a"/>
<rect x="37" y="116" width="1.8" height="1.8" fill="#9a9a9a"/>
<rect x="43" y="116" width="1.8" height="1.8" fill="#9a9a9a"/>
<rect x="49" y="116" width="1.8" height="1.8" fill="#9a9a9a"/>
<rect x="55" y="116" width="1.8" height="1.8" fill="#9a9a9a"/>
<rect x="61" y="116" width="1.8" height="1.8" fill="#9a9a9a"/>
<rect x="2.0" y="120.9" width="68.0" height="24.099999999999994" fill="url(#lb)" stroke="#8e8e8e" stroke-width="1"/>
<path d="M32 133L40 128.5V137.5Z" fill="#000"/>
<rect x="2.0" y="157.0" width="33.0" height="32.80000000000001" fill="url(#lb)" stroke="#8e8e8e" stroke-width="1"/>
<rect x="37.0" y="157.0" width="33.0" height="32.80000000000001" fill="url(#lb)" stroke="#8e8e8e" stroke-width="1"/>
<rect x="2.0" y="199.8" width="33.0" height="32.79999999999998" fill="url(#lb)" stroke="#8e8e8e" stroke-width="1"/>
<rect x="37.0" y="199.8" width="33.0" height="32.79999999999998" fill="url(#lb)" stroke="#8e8e8e" stroke-width="1"/>
<rect x="2.0" y="235.0" width="33.0" height="32.69999999999999" fill="url(#lb)" stroke="#8e8e8e" stroke-width="1"/>
<rect x="37.0" y="235.0" width="33.0" height="32.69999999999999" fill="url(#lb)" stroke="#8e8e8e" stroke-width="1"/>
<rect x="2.0" y="270.1" width="33.0" height="32.39999999999998" fill="url(#lb)" stroke="#8e8e8e" stroke-width="1"/>
<rect x="37.0" y="270.1" width="33.0" height="32.39999999999998" fill="url(#lb)" stroke="#8e8e8e" stroke-width="1"/>
<rect x="2.0" y="312.8" width="33.0" height="33.39999999999998" fill="url(#lb)" stroke="#8e8e8e" stroke-width="1"/>
<rect x="37.0" y="312.8" width="33.0" height="33.39999999999998" fill="url(#lb)" stroke="#8e8e8e" stroke-width="1"/>
<rect x="2.0" y="356.0" width="33.0" height="32.89999999999998" fill="url(#lb)" stroke="#8e8e8e" stroke-width="1"/>
<rect x="37.0" y="356.0" width="33.0" height="32.89999999999998" fill="url(#lb)" stroke="#8e8e8e" stroke-width="1"/>
<rect x="2.0" y="399.1" width="33.0" height="32.89999999999998" fill="url(#lb)" stroke="#8e8e8e" stroke-width="1"/>
<rect x="37.0" y="399.1" width="33.0" height="32.89999999999998" fill="url(#lb)" stroke="#8e8e8e" stroke-width="1"/>
<rect x="2.0" y="484.8" width="33.0" height="33.19999999999999" fill="url(#lb)" stroke="#8e8e8e" stroke-width="1"/>
<rect x="37.0" y="484.8" width="33.0" height="33.19999999999999" fill="url(#lb)" stroke="#8e8e8e" stroke-width="1"/>
<rect x="2.0" y="528.1" width="33.0" height="32.799999999999955" fill="url(#lb)" stroke="#8e8e8e" stroke-width="1"/>
<rect x="37.0" y="528.1" width="33.0" height="32.799999999999955" fill="url(#lb)" stroke="#8e8e8e" stroke-width="1"/>
<rect x="2.0" y="570.5" width="33.0" height="33.5" fill="url(#lb)" stroke="#8e8e8e" stroke-width="1"/>
<rect x="2.0" y="613.5" width="33.0" height="33.700000000000045" rx="4" fill="url(#lp)" stroke="#9c9c9c" stroke-width="1"/>
<rect x="37.0" y="613.5" width="33.0" height="33.700000000000045" fill="url(#lb)" stroke="#8e8e8e" stroke-width="1"/>
<rect x="2.0" y="648.7" width="33.0" height="33.19999999999993" fill="url(#lb)" stroke="#8e8e8e" stroke-width="1"/>
<rect x="37.0" y="648.7" width="33.0" height="33.19999999999993" fill="url(#lb)" stroke="#8e8e8e" stroke-width="1"/>
<rect x="2.0" y="684.0" width="33.0" height="33.200000000000045" fill="url(#lb)" stroke="#8e8e8e" stroke-width="1"/>
<rect x="2.0" y="726.7" width="33.0" height="33.0" fill="url(#lb)" stroke="#8e8e8e" stroke-width="1"/>
<rect x="37.0" y="726.7" width="33.0" height="33.0" fill="url(#lb)" stroke="#8e8e8e" stroke-width="1"/>
<rect x="2.0" y="769.5" width="33.0" height="30" fill="url(#lb)" stroke="#8e8e8e" stroke-width="1"/>
<rect x="2.2" y="441.7" width="32.9" height="33.19999999999999" rx="4" fill="url(#lp)" stroke="#9c9c9c" stroke-width="1"/>
<text x="18.6" y="462" font-size="11" text-anchor="middle" fill="#222" font-family="Liberation Sans">Auto</text>
<path d="M13.3 173.5H21.7M17.5 169.3V177.7" stroke="#222" stroke-width="1.1" fill="none"/>
<circle cx="42.5" cy="162.5" r="1.7" fill="#ff1010"/>
<circle cx="42.5" cy="169.5" r="1.7" fill="#ff1010"/>
<circle cx="42.5" cy="176.5" r="1.7" fill="#ff1010"/>
<circle cx="42.5" cy="183.5" r="1.7" fill="#ff1010"/>
<circle cx="49.5" cy="162.5" r="1.7" fill="#ff1010"/>
<circle cx="49.5" cy="169.5" r="1.7" fill="#ff1010"/>
<circle cx="49.5" cy="176.5" r="1.7" fill="#ff1010"/>
<circle cx="49.5" cy="183.5" r="1.7" fill="#ff1010"/>
<circle cx="56.5" cy="162.5" r="1.7" fill="#ff1010"/>
<circle cx="56.5" cy="169.5" r="1.7" fill="#ff1010"/>
<circle cx="56.5" cy="176.5" r="1.7" fill="#ff1010"/>
<circle cx="56.5" cy="183.5" r="1.7" fill="#ff1010"/>
<circle cx="63.5" cy="162.5" r="1.7" fill="#ff1010"/>
<circle cx="63.5" cy="169.5" r="1.7" fill="#ff1010"/>
<circle cx="63.5" cy="176.5" r="1.7" fill="#ff1010"/>
<circle cx="63.5" cy="183.5" r="1.7" fill="#ff1010"/>
<path d="M7.4 215.2L28.4 226.3M15.9 205.2Q16.5 216 28.4 217.7" stroke="#222" stroke-width="1.1" fill="none"/>
<circle cx="15.9" cy="205.2" r="1.9" fill="#ff1010"/><circle cx="28.4" cy="217.7" r="1.9" fill="#ff1010"/><circle cx="7.4" cy="215.2" r="1.9" fill="#ff1010"/><circle cx="28.4" cy="226.3" r="1.9" fill="#ff1010"/>
<path d="M42.3 216.6L63.9 204.9M50.7 226.3L51.8 221.7L54.4 217.3L58.5 214.9L63.5 213.8" stroke="#222" stroke-width="1.1" fill="none"/>
<circle cx="42.3" cy="216.6" r="1.7" fill="#ff1010"/>
<circle cx="47.6" cy="213.8" r="1.7" fill="#ff1010"/>
<circle cx="52.8" cy="210.9" r="1.7" fill="#ff1010"/>
<circle cx="58.2" cy="208.1" r="1.7" fill="#ff1010"/>
<circle cx="63.9" cy="204.9" r="1.7" fill="#ff1010"/>
<circle cx="50.7" cy="226.3" r="1.7" fill="#ff1010"/>
<circle cx="51.8" cy="221.7" r="1.7" fill="#ff1010"/>
<circle cx="54.4" cy="217.3" r="1.7" fill="#ff1010"/>
<circle cx="58.5" cy="214.9" r="1.7" fill="#ff1010"/>
<circle cx="63.5" cy="213.8" r="1.7" fill="#ff1010"/>
<path d="M9.7 240.7L19.5 252.1L28.4 248.7M19.5 252.1Q16 256 15.3 261M17 248Q21 244 25.5 249" stroke="#222" stroke-width="1.1" fill="none"/>
<circle cx="19.5" cy="252.1" r="1.9" fill="#ff1010"/>
<circle cx="56.4" cy="247.8" r="6.8" stroke="#222" stroke-width="1.1" fill="none"/><path d="M43.3 259.6L50.4 245" stroke="#222" stroke-width="1.1" fill="none"/>
<circle cx="50.4" cy="245" r="1.9" fill="#ff1010"/>
<path d="M6.4 286.6L28.4 275.7M15.3 296.1Q15.5 285 28.4 283.4" stroke="#222" stroke-width="1.1" fill="none"/>
<circle cx="17.3" cy="281" r="1.9" fill="#ff1010"/><circle cx="28" cy="295.9" r="1.9" fill="#ff1010"/>
<circle cx="52.8" cy="285.9" r="9.9" stroke="#222" stroke-width="1.1" fill="none"/>
<circle cx="52.8" cy="276" r="1.9" fill="#ff1010"/><circle cx="52.8" cy="295.8" r="1.9" fill="#ff1010"/><circle cx="42.9" cy="285.9" r="1.9" fill="#ff1010"/><circle cx="62.7" cy="285.9" r="1.9" fill="#ff1010"/><circle cx="52.8" cy="285.9" r="1.9" fill="#ff1010"/>
<path d="M6.9 329.7L29 318.5M15.4 339.3Q16 328 28.5 326.2" stroke="#222" stroke-width="1.1" fill="none"/>
<circle cx="18" cy="324.2" r="1.9" fill="#ff1010"/><circle cx="19.3" cy="330.3" r="1.9" fill="#ff1010"/>
<rect x="41.3" y="319.6" width="23.1" height="18.6" fill="none" stroke="#333" stroke-width="1.6"/><path d="M43 337L63 321" stroke="#999" stroke-width="0.8" stroke-dasharray="1.5 1.5"/>
<circle cx="52.9" cy="328.8" r="1.9" fill="#ff1010"/>
<path d="M8.5 372.4L29 361.6M16.2 382.4Q16.5 371 28.5 369.3" stroke="#222" stroke-width="1.1" fill="none"/>
<path d="M6 368L11 364.5L10.5 367.5Z M19 385L21 378L22 383Z" fill="#222" stroke="#222" stroke-width="1"/>
<circle cx="15.1" cy="368.6" r="1.9" fill="#ff1010"/><circle cx="18.8" cy="374" r="1.9" fill="#ff1010"/>
<path d="M49.6 368.6L63.2 360.8" stroke="#333" stroke-width="1" stroke-dasharray="2 1.5"/><circle cx="63.2" cy="360.8" r="1.2" fill="#222"/><path d="M41.5 369L47 365.5L46 368Z" fill="#222" stroke="#222"/><circle cx="42.5" cy="372.5" r="1.2" fill="#222"/>
<circle cx="49.6" cy="368.6" r="1.9" fill="#ff1010"/>
<text x="59" y="375" font-size="9.5" fill="#222" font-family="Liberation Sans">2</text><text x="40" y="384.5" font-size="9.5" fill="#222" font-family="Liberation Sans">1</text>
<path d="M5.9 412.5L30 419.7M24.3 402.4L18.5 427.1" stroke="#222" stroke-width="1.1" fill="none"/>
<circle cx="20.8" cy="417.1" r="1.9" fill="#ff1010"/>
<path d="M43.1 416L53.2 419.7M62.9 406.3L60.1 417.1" stroke="#222" stroke-width="1.1" fill="none"/>
<circle cx="58.6" cy="421.2" r="1.9" fill="#ff1010"/>
<text x="6.5" y="497" font-size="9" fill="#222" font-family="Liberation Sans">y</text><path d="M14.5 489.3V504.4H30.7" stroke="#333" stroke-width="1.1" fill="none"/><text x="24" y="513" font-size="9" fill="#222" font-family="Liberation Sans">x</text>
<circle cx="28" cy="490.5" r="1.6" fill="#ff1010"/>
<text x="44.5" y="500" font-size="9" fill="#222" font-family="Liberation Sans">r</text><path d="M41.4 510L57.6 493.4Q65 499 65.3 510H41.4" stroke="#222" stroke-width="1.1" fill="none"/><text x="55" y="507.5" font-size="9" fill="#222" font-family="Liberation Sans">a</text>
<circle cx="57.6" cy="493.4" r="1.6" fill="#ff1010"/>
<path d="M9.3 535.9H25.9M9.3 535.9V552" stroke="#aaa" stroke-width="0.7"/>
<circle cx="9.3" cy="535.9" r="1.8" fill="#ff1010"/><circle cx="25.9" cy="535.9" r="1" fill="#222"/><circle cx="9.3" cy="552" r="1" fill="#222"/>
<text x="22" y="546" font-size="9" fill="#222" font-family="Liberation Sans">2</text><text x="13.5" y="555.5" font-size="9" fill="#222" font-family="Liberation Sans">1</text>
<path d="M60.5 535.9V552H44.5" stroke="#aaa" stroke-width="0.7" fill="none"/>
<circle cx="60.5" cy="552" r="1.8" fill="#ff1010"/><circle cx="60.5" cy="535.9" r="1" fill="#222"/><circle cx="44.5" cy="552" r="1" fill="#222"/>
<text x="52.5" y="541" font-size="9" fill="#222" font-family="Liberation Sans">2</text><text x="42" y="548" font-size="9" fill="#222" font-family="Liberation Sans">1</text>
<path d="M7.5 577H28.5V590L21.5 597H13V592H7.5Z" fill="none" stroke="#f4a8a8" stroke-width="0.8"/><circle cx="14.5" cy="584" r="4" fill="none" stroke="#f4a8a8" stroke-width="0.8"/><path d="M17 593L24 584V593Z" fill="none" stroke="#f4a8a8" stroke-width="0.8"/>
<circle cx="18" cy="586.9" r="1.6" fill="#ff7070"/>
<path d="M15.5 630H20.5M18 627.5V632.5" stroke="#333" stroke-width="0.9"/>
<path d="M41.6 629.2H64.7M52.7 617.7V640.8" stroke="#222" stroke-width="1.1"/><use href="#cp" x="52.7" y="629.2"/>
<path d="M5.8 664.6H29.6" stroke="#222" stroke-width="1.1"/><use href="#cp" x="17.3" y="664.6"/>
<path d="M52.7 652.3V676.6" stroke="#222" stroke-width="1.1"/><use href="#cp" x="52.7" y="664.6"/>
<path d="M8.8 708.9L27.3 698.5" stroke="#222" stroke-width="1.1"/><path d="M9 689L9.8 692.5M13 687.5L13.8 691M17 688L17.5 691.5M20.5 689.5L19.5 692.5M24.5 692L22.5 694.5M27.5 702.5L25 703.5M28.5 709H25.5" stroke="#777" stroke-width="0.8"/><use href="#cp" x="8.8" y="708.9"/>
<use href="#cp" x="15" y="737.1"/><path d="M16.2 741.3V751.5L18.5 749.3L20.3 753L22 752.2L20.2 748.6L23.2 748.3Z" fill="#fff" stroke="#444" stroke-width="0.8"/>
<ellipse cx="46.199999999999996" cy="738.4" rx="2.3" ry="3.3" fill="none" stroke="#111" stroke-width="1.3"/><path d="M48.5 737.9H60.4V741.4M57.9 737.9V740.6M55.4 737.9V741.4" stroke="#111" stroke-width="1.6" fill="none"/>
<use href="#cp" x="52.7" y="750.5"/>
<ellipse cx="11.100000000000001" cy="785.3" rx="2.3" ry="3.3" fill="none" stroke="#111" stroke-width="1.3"/><path d="M13.4 784.8H25.3V788.3M22.8 784.8V787.5M20.3 784.8V788.3" stroke="#111" stroke-width="1.6" fill="none"/>
</svg>
<div class="a" style="left:1154px;top:107px;width:2px;height:691px;background:#cfcfcf"></div>
<div class="a" style="left:1454px;top:107px;width:1.5px;height:691px;background:#d0d0d0"></div>
<div class="a" style="left:1156px;top:108px;width:298px;height:22px;background:linear-gradient(#e6e6e6,#d9d9d9)"></div>
<div class="t" style="left:1173.5px;width:298px;text-align:center;top:113px;font-size:12px;color:#303030">Block List</div>
<div class="a" style="left:1156px;top:130.5px;width:298px;height:25px;background:linear-gradient(#f3f3f3,#e6e6e6);border-top:2px solid #b8b8b8;border-bottom:2px solid #b8b8b8"></div>
<div class="a" style="left:1156px;top:156px;width:298px;height:164.5px;background:#fff"></div>
<div class="a" style="left:1156px;top:197px;width:298px;height:20px;background:#d4d4d4"></div>
<div class="t" style="left:1205.5px;top:159.8px;font-size:13.3px;color:#1a1a1a">Model (*Model_Space)</div>
<div class="t" style="left:1205.5px;top:179.8px;font-size:13.2px;color:#1a1a1a">Layout1 (*Paper_Space)</div>
<div class="t" style="left:1205.5px;top:199.6px;font-size:13.2px;color:#1a1a1a">Border</div>
<div class="a" style="left:1156px;top:320.5px;width:298px;height:2px;background:#bdbdbd"></div>
<div class="a" style="left:1156px;top:322.5px;width:298px;height:21px;background:linear-gradient(#e6e6e6,#d9d9d9)"></div>
<div class="t" style="left:1173.5px;width:298px;text-align:center;top:327.5px;font-size:12px;color:#303030">Layer List</div>
<div class="a" style="left:1156px;top:343.5px;width:298px;height:27px;background:linear-gradient(#f3f3f3,#e6e6e6);border-top:2px solid #b8b8b8;border-bottom:2px solid #b8b8b8"></div>
<div class="a" style="left:1156px;top:370.5px;width:298px;height:427.5px;background:#fff"></div>
<div class="a" style="left:1156px;top:391px;width:298px;height:19.6px;background:#0a4ad8"></div>
<div class="t" style="left:1183.2px;top:374.2px;font-size:13.2px;color:#1a1a1a">0</div>
<div class="t" style="left:1183.2px;top:394.2px;font-size:13.2px;color:#fff">Border</div>
<div class="t" style="left:1183.2px;top:414.2px;font-size:13.2px;color:#1a1a1a">Center</div>
<div class="t" style="left:1183.2px;top:434.2px;font-size:13.2px;color:#1a1a1a">Defpoints</div>
<div class="t" style="left:1183.2px;top:454.2px;font-size:13.2px;color:#1a1a1a">Dimensions</div>
<div class="t" style="left:1183.2px;top:474.2px;font-size:13.2px;color:#1a1a1a">Visible</div>
<svg style="left:1150px;top:105px" width="310" height="400" viewBox="1150 105 310 400">
<circle cx="1164" cy="118" r="6.8" fill="#6c6c6c"/><path d="M1161.2 115.2L1166.8 120.8M1166.8 115.2L1161.2 120.8" stroke="#e8e8e8" stroke-width="1.6"/><circle cx="1182" cy="118" r="6.8" fill="#6c6c6c"/><rect x="1180.5" y="114.5" width="5" height="4" fill="none" stroke="#e8e8e8" stroke-width="1"/><rect x="1178.5" y="117" width="5" height="4" fill="#6c6c6c" stroke="#e8e8e8" stroke-width="1"/>
<rect x="1192" y="132" width="2" height="22" fill="#bcbcbc"/>
<rect x="1229.5" y="132" width="2" height="22" fill="#bcbcbc"/>
<rect x="1267" y="132" width="2" height="22" fill="#bcbcbc"/>
<rect x="1304.3" y="132" width="2" height="22" fill="#bcbcbc"/>
<rect x="1341.8" y="132" width="2" height="22" fill="#bcbcbc"/>
<rect x="1379.3" y="132" width="2" height="22" fill="#bcbcbc"/>
<rect x="1417" y="132" width="2" height="22" fill="#bcbcbc"/>
<path d="M1166.60 143.00Q1174.00 132.40 1181.40 143.00Q1174.00 153.60 1166.60 143.00Z" fill="#000"/><path d="M1169.00 143.60Q1174.00 136.60 1179.00 143.60Q1174.00 149.60 1169.00 143.60Z" fill="#fff"/><circle cx="1174.00" cy="142.80" r="2.90" fill="#000"/><circle cx="1173.20" cy="141.80" r="0.7" fill="#fff"/>
<path d="M1204.10 143.00Q1211.50 132.40 1218.90 143.00Q1211.50 153.60 1204.10 143.00Z" fill="#b0b0b0"/><path d="M1206.50 143.60Q1211.50 136.60 1216.50 143.60Q1211.50 149.60 1206.50 143.60Z" fill="#f0f0f0"/><circle cx="1211.50" cy="142.80" r="2.90" fill="#b0b0b0"/><circle cx="1210.70" cy="141.80" r="0.7" fill="#f0f0f0"/>
<path d="M1243 143H1255M1249 137V149" stroke="#f00000" stroke-width="2.6"/>
<path d="M1280 143H1292" stroke="#f00000" stroke-width="2.6"/>
<text x="1316.5" y="147.7" font-size="11.5" fill="#222" font-family="Liberation Sans">a</text><text x="1325.5" y="147.7" font-size="11.5" fill="#222" font-family="Liberation Sans">b</text><path d="M1323.8 136.5V149.5" stroke="#222" stroke-width="0.9"/>
<path d="M1354 149.4L1367.7 136.3" stroke="#8a5a20" stroke-width="3.2" stroke-linecap="butt"/><path d="M1354 149.4L1367.7 136.3" stroke="#e8b040" stroke-width="2" /><path d="M1365.64 138.27L1367.7 136.3" stroke="#e03030" stroke-width="3"/><path d="M1354 149.4L1355.64 147.83" stroke="#f0d8b0" stroke-width="2.4"/>
<rect x="1393.2" y="136.3" width="11.5" height="12.5" fill="#e8e8f0" stroke="#c0c0c8" stroke-width="0.6"/><path d="M1396 138H1399.5V146" stroke="#1a50f0" stroke-width="2" fill="none"/><path d="M1395.5 144.5L1399.5 149L1403.5 144.5Z" fill="#1a50f0"/>
<rect x="1431.5" y="138.3" width="9.3" height="9.3" fill="#f08a60" stroke="#e04020" stroke-width="1"/><path d="M1433.8 140.6L1438.5 145.3M1438.5 140.6L1433.8 145.3" stroke="#fff" stroke-width="1.3"/>
<path d="M1161.60 167.00Q1169.00 156.40 1176.40 167.00Q1169.00 177.60 1161.60 167.00Z" fill="#000"/><path d="M1164.00 167.60Q1169.00 160.60 1174.00 167.60Q1169.00 173.60 1164.00 167.60Z" fill="#fff"/><circle cx="1169.00" cy="166.80" r="2.90" fill="#000"/><circle cx="1168.20" cy="165.80" r="0.7" fill="#fff"/>
<path d="M1161.60 187.00Q1169.00 176.40 1176.40 187.00Q1169.00 197.60 1161.60 187.00Z" fill="#000"/><path d="M1164.00 187.60Q1169.00 180.60 1174.00 187.60Q1169.00 193.60 1164.00 187.60Z" fill="#fff"/><circle cx="1169.00" cy="186.80" r="2.90" fill="#000"/><circle cx="1168.20" cy="185.80" r="0.7" fill="#fff"/>
<path d="M1185 193L1197.5 181" stroke="#8a5a20" stroke-width="3.2" stroke-linecap="butt"/><path d="M1185 193L1197.5 181" stroke="#e8b040" stroke-width="2" /><path d="M1195.62 182.80L1197.5 181" stroke="#e03030" stroke-width="3"/><path d="M1185 193L1186.50 191.56" stroke="#f0d8b0" stroke-width="2.4"/>
<path d="M1161.60 207.00Q1169.00 196.40 1176.40 207.00Q1169.00 217.60 1161.60 207.00Z" fill="#3a4a5c"/><path d="M1164.00 207.60Q1169.00 200.60 1174.00 207.60Q1169.00 213.60 1164.00 207.60Z" fill="#d4d4d4"/><circle cx="1169.00" cy="206.80" r="2.90" fill="#3a4a5c"/><circle cx="1168.20" cy="205.80" r="0.7" fill="#d4d4d4"/>
<circle cx="1164" cy="332.5" r="6.8" fill="#6c6c6c"/><path d="M1161.2 329.7L1166.8 335.3M1166.8 329.7L1161.2 335.3" stroke="#e8e8e8" stroke-width="1.6"/><circle cx="1182" cy="332.5" r="6.8" fill="#6c6c6c"/><rect x="1180.5" y="329.0" width="5" height="4" fill="none" stroke="#e8e8e8" stroke-width="1"/><rect x="1178.5" y="331.5" width="5" height="4" fill="#6c6c6c" stroke="#e8e8e8" stroke-width="1"/>
<rect x="1213.5" y="345.5" width="2" height="23" fill="#bcbcbc"/>
<rect x="1273.5" y="345.5" width="2" height="23" fill="#bcbcbc"/>
<rect x="1333.5" y="345.5" width="2" height="23" fill="#bcbcbc"/>
<rect x="1393.5" y="345.5" width="2" height="23" fill="#bcbcbc"/>
<path d="M1177.60 357.00Q1185.00 346.40 1192.40 357.00Q1185.00 367.60 1177.60 357.00Z" fill="#000"/><path d="M1180.00 357.60Q1185.00 350.60 1190.00 357.60Q1185.00 363.60 1180.00 357.60Z" fill="#fff"/><circle cx="1185.00" cy="356.80" r="2.90" fill="#000"/><circle cx="1184.20" cy="355.80" r="0.7" fill="#fff"/>
<path d="M1237.60 357.00Q1245.00 346.40 1252.40 357.00Q1245.00 367.60 1237.60 357.00Z" fill="#b0b0b0"/><path d="M1240.00 357.60Q1245.00 350.60 1250.00 357.60Q1245.00 363.60 1240.00 357.60Z" fill="#f0f0f0"/><circle cx="1245.00" cy="356.80" r="2.90" fill="#b0b0b0"/><circle cx="1244.20" cy="355.80" r="0.7" fill="#f0f0f0"/>
<path d="M1299 357H1311M1305 351V363" stroke="#f00000" stroke-width="2.6"/>
<path d="M1359 357H1371" stroke="#f00000" stroke-width="2.6"/>
<path d="M1418.5 364L1431.5 350.5" stroke="#8a5a20" stroke-width="3.2" stroke-linecap="butt"/><path d="M1418.5 364L1431.5 350.5" stroke="#e8b040" stroke-width="2" /><path d="M1429.55 352.52L1431.5 350.5" stroke="#e03030" stroke-width="3"/><path d="M1418.5 364L1420.06 362.38" stroke="#f0d8b0" stroke-width="2.4"/>
<rect x="1161.6" y="377.5" width="15" height="8.2" fill="#000" stroke="#000" stroke-width="1"/>
<path d="M1415.60 380.40Q1423.00 369.80 1430.40 380.40Q1423.00 391.00 1415.60 380.40Z" fill="#000"/><path d="M1418.00 381.00Q1423.00 374.00 1428.00 381.00Q1423.00 387.00 1418.00 381.00Z" fill="#fff"/><circle cx="1423.00" cy="380.20" r="2.90" fill="#000"/><circle cx="1422.20" cy="379.20" r="0.7" fill="#fff"/>
<path d="M1441.6 380.7V377.7Q1441.6 374.2 1445.0 374.2Q1448.3999999999999 374.2 1448.3999999999999 377.7V380.7" stroke="#b4b4b4" stroke-width="1.2" fill="none"/><rect x="1440.1" y="380.4" width="9.8" height="7.1" fill="#b4b4b4"/>
<rect x="1161.6" y="397.5" width="15" height="8.2" fill="#3a4250" stroke="#000" stroke-width="1"/>
<path d="M1415.60 400.40Q1423.00 389.80 1430.40 400.40Q1423.00 411.00 1415.60 400.40Z" fill="#303c4c"/><path d="M1418.00 401.00Q1423.00 394.00 1428.00 401.00Q1423.00 407.00 1418.00 401.00Z" fill="#0a4ad8"/><circle cx="1423.00" cy="400.20" r="2.90" fill="#303c4c"/><circle cx="1422.20" cy="399.20" r="0.7" fill="#0a4ad8"/>
<path d="M1441.6 400.7V397.7Q1441.6 394.2 1445.0 394.2Q1448.3999999999999 394.2 1448.3999999999999 397.7V400.7" stroke="#aab8cc" stroke-width="1.2" fill="none"/><rect x="1440.1" y="400.4" width="9.8" height="7.1" fill="#aab8cc"/>
<path d="M1394.8 406.8L1407.6 394.6" stroke="#8a5a20" stroke-width="3.2" stroke-linecap="butt"/><path d="M1394.8 406.8L1407.6 394.6" stroke="#e8b040" stroke-width="2" /><path d="M1405.68 396.43L1407.6 394.6" stroke="#e03030" stroke-width="3"/><path d="M1394.8 406.8L1396.34 405.34" stroke="#f0d8b0" stroke-width="2.4"/>
<rect x="1161.6" y="417.5" width="15" height="8.2" fill="#ff0000" stroke="#000" stroke-width="1"/>
<path d="M1415.60 420.40Q1423.00 409.80 1430.40 420.40Q1423.00 431.00 1415.60 420.40Z" fill="#000"/><path d="M1418.00 421.00Q1423.00 414.00 1428.00 421.00Q1423.00 427.00 1418.00 421.00Z" fill="#fff"/><circle cx="1423.00" cy="420.20" r="2.90" fill="#000"/><circle cx="1422.20" cy="419.20" r="0.7" fill="#fff"/>
<path d="M1441.6 420.7V417.7Q1441.6 414.2 1445.0 414.2Q1448.3999999999999 414.2 1448.3999999999999 417.7V420.7" stroke="#b4b4b4" stroke-width="1.2" fill="none"/><rect x="1440.1" y="420.4" width="9.8" height="7.1" fill="#b4b4b4"/>
<rect x="1161.6" y="437.5" width="15" height="8.2" fill="#fff" stroke="#000" stroke-width="1"/>
<path d="M1415.60 440.40Q1423.00 429.80 1430.40 440.40Q1423.00 451.00 1415.60 440.40Z" fill="#000"/><path d="M1418.00 441.00Q1423.00 434.00 1428.00 441.00Q1423.00 447.00 1418.00 441.00Z" fill="#fff"/><circle cx="1423.00" cy="440.20" r="2.90" fill="#000"/><circle cx="1422.20" cy="439.20" r="0.7" fill="#fff"/>
<path d="M1441.6 440.7V437.7Q1441.6 434.2 1445.0 434.2Q1448.3999999999999 434.2 1448.3999999999999 437.7V440.7" stroke="#b4b4b4" stroke-width="1.2" fill="none"/><rect x="1440.1" y="440.4" width="9.8" height="7.1" fill="#b4b4b4"/>
<rect x="1161.6" y="457.5" width="15" height="8.2" fill="#0e8080" stroke="#000" stroke-width="1"/>
<path d="M1415.60 460.40Q1423.00 449.80 1430.40 460.40Q1423.00 471.00 1415.60 460.40Z" fill="#000"/><path d="M1418.00 461.00Q1423.00 454.00 1428.00 461.00Q1423.00 467.00 1418.00 461.00Z" fill="#fff"/><circle cx="1423.00" cy="460.20" r="2.90" fill="#000"/><circle cx="1422.20" cy="459.20" r="0.7" fill="#fff"/>
<path d="M1441.6 460.7V457.7Q1441.6 454.2 1445.0 454.2Q1448.3999999999999 454.2 1448.3999999999999 457.7V460.7" stroke="#b4b4b4" stroke-width="1.2" fill="none"/><rect x="1440.1" y="460.4" width="9.8" height="7.1" fill="#b4b4b4"/>
<rect x="1161.6" y="477.5" width="15" height="8.2" fill="#000" stroke="#000" stroke-width="1"/>
<path d="M1415.60 480.40Q1423.00 469.80 1430.40 480.40Q1423.00 491.00 1415.60 480.40Z" fill="#000"/><path d="M1418.00 481.00Q1423.00 474.00 1428.00 481.00Q1423.00 487.00 1418.00 481.00Z" fill="#fff"/><circle cx="1423.00" cy="480.20" r="2.90" fill="#000"/><circle cx="1422.20" cy="479.20" r="0.7" fill="#fff"/>
<path d="M1441.6 480.7V477.7Q1441.6 474.2 1445.0 474.2Q1448.3999999999999 474.2 1448.3999999999999 477.7V480.7" stroke="#b4b4b4" stroke-width="1.2" fill="none"/><rect x="1440.1" y="480.4" width="9.8" height="7.1" fill="#b4b4b4"/>
</svg>
<svg style="left:1455px;top:107px" width="45" height="691" viewBox="1455 107 45 691">
<rect x="1463" y="116.2" width="1.6" height="1.6" fill="#9a9a9a"/>
<rect x="1469" y="116.2" width="1.6" height="1.6" fill="#9a9a9a"/>
<rect x="1475" y="116.2" width="1.6" height="1.6" fill="#9a9a9a"/>
<rect x="1481" y="116.2" width="1.6" height="1.6" fill="#9a9a9a"/>
<rect x="1487" y="116.2" width="1.6" height="1.6" fill="#9a9a9a"/>
<rect x="1456.4" y="120.6" width="48" height="41.400000000000006" rx="6" fill="#b9b9b9"/>
<rect x="1456.4" y="167.4" width="48" height="42.29999999999998" rx="6" fill="#b9b9b9"/>
<rect x="1456.4" y="417.8" width="48" height="43.0" rx="6" fill="#b9b9b9"/>
<rect x="1463.7" y="127.5" width="26.5" height="27" fill="#fff" stroke="#111" stroke-width="1"/><rect x="1463.5" y="127" width="27" height="5" fill="#000"/><rect x="1464.6" y="128" width="3" height="3" fill="#fff"/>
<rect x="1463.7" y="174.4" width="26.5" height="27" fill="#fff" stroke="#111" stroke-width="1"/><rect x="1463.5" y="173.9" width="27" height="5" fill="#000"/><rect x="1464.6" y="174.9" width="3" height="3" fill="#fff"/>
<rect x="1463.7" y="221.2" width="26.5" height="27" fill="#fff" stroke="#111" stroke-width="1"/><rect x="1463.5" y="220.7" width="27" height="5" fill="#000"/><rect x="1464.6" y="221.7" width="3" height="3" fill="#fff"/>
<rect x="1463.7" y="277.5" width="26.5" height="27" fill="#fff" stroke="#111" stroke-width="1"/><rect x="1463.5" y="277" width="27" height="5" fill="#000"/><rect x="1464.6" y="278" width="3" height="3" fill="#fff"/>
<rect x="1463.7" y="323.5" width="26.5" height="27" fill="#fff" stroke="#111" stroke-width="1"/><rect x="1463.5" y="323" width="27" height="5" fill="#000"/><rect x="1464.6" y="324" width="3" height="3" fill="#fff"/>
<rect x="1463.7" y="369.4" width="26.5" height="27" fill="#fff" stroke="#111" stroke-width="1"/><rect x="1463.5" y="368.9" width="27" height="5" fill="#000"/><rect x="1464.6" y="369.9" width="3" height="3" fill="#fff"/>
<rect x="1463.7" y="425.5" width="26.5" height="27" fill="#fff" stroke="#111" stroke-width="1"/><rect x="1463.5" y="425" width="27" height="5" fill="#000"/><rect x="1464.6" y="426" width="3" height="3" fill="#fff"/>
<rect x="1463.7" y="472.7" width="26.5" height="27" fill="#fff" stroke="#111" stroke-width="1"/><rect x="1463.5" y="472.2" width="27" height="5" fill="#000"/><rect x="1464.6" y="473.2" width="3" height="3" fill="#fff"/>
<path d="M1470 149L1470 140L1476 136L1476 146Z" fill="#777" stroke="#555" stroke-width="0.6"/><path d="M1473 148L1473 139L1482 135L1482 144Z" fill="#f4f4f4" stroke="#777" stroke-width="0.8"/><path d="M1476 145L1479.5 139L1480 144Z" fill="none" stroke="#e84040" stroke-width="0.8"/>
<rect x="1469" y="184.9" width="11" height="9" fill="#f4ecc0" stroke="#777" stroke-width="0.8"/><circle cx="1480" cy="193.9" r="4.5" fill="#f4ecc0" stroke="#777" stroke-width="0.8"/>
<rect x="1469.5" y="230.7" width="15" height="11" rx="2" fill="#f2f4f6" stroke="#c8d4e4" stroke-width="0.8"/>
<rect x="1466.5" y="285.5" width="3.5" height="2.6" fill="#000"/><rect x="1472.5" y="285.3" width="14" height="2.8" fill="none" stroke="#222" stroke-width="0.7"/>
<rect x="1466.5" y="290.5" width="3.5" height="2.6" fill="#000"/><rect x="1472.5" y="290.3" width="14" height="2.8" fill="none" stroke="#222" stroke-width="0.7"/>
<rect x="1466.5" y="295.5" width="3.5" height="2.6" fill="#000"/><rect x="1472.5" y="295.3" width="14" height="2.8" fill="none" stroke="#222" stroke-width="0.7"/>
<path d="M1469.5 332H1484.5L1478.5 339V345L1475.5 343V339Z" fill="#999" stroke="#555" stroke-width="0.6"/>
<path d="M1468.5 377.9V391.9L1475 386.9V381.9Z" fill="#fff" stroke="#333" stroke-width="0.8"/><rect x="1475" y="381.9" width="9" height="5.5" rx="1" fill="#888"/><path d="M1467 384.4H1487" stroke="#f08080" stroke-width="0.6" stroke-dasharray="1 1"/>
<path d="M1466 434.0H1480" stroke="#bbb" stroke-width="0.8"/>
<path d="M1466 437.3H1478" stroke="#bbb" stroke-width="0.8"/>
<path d="M1466 440.6H1480" stroke="#bbb" stroke-width="0.8"/>
<path d="M1466 443.9H1478" stroke="#bbb" stroke-width="0.8"/>
<path d="M1463.7 447.5H1490.2" stroke="#111" stroke-width="0.8"/><path d="M1473 450H1488" stroke="#777" stroke-width="0.8"/>
<rect x="1470.5" y="482.2" width="12" height="14" rx="1" fill="#c88a30"/><rect x="1472" y="483.7" width="9" height="11" fill="#f4f4f4"/><rect x="1473.5" y="480.7" width="6" height="3" rx="1" fill="#999"/>
<path d="M1463 262.3H1500M1463 410.6H1500" stroke="#888" stroke-width="0.8" stroke-dasharray="1 2"/>
</svg>
<svg style="left:72px;top:107px" width="80" height="25" viewBox="72 107 80 25"><path d="M79 115.2L87 123.2M87 115.2L79 123.2" stroke="#6a6a6a" stroke-width="1.1"/><circle cx="102.3" cy="119.5" r="5.8" fill="#dfe6ee" stroke="#2a3a8a" stroke-width="1.6"/><path d="M99 117L105 122" stroke="#e8a020" stroke-width="1.6"/><circle cx="105.8" cy="123.2" r="1.3" fill="#e06060"/></svg>
<div class="t" style="left:592px;top:114.2px;font-size:12px;color:#111">* birdhouse.dxf</div>
<div class="a" style="left:231px;top:736px;width:717px;height:7.7px;background:#808080;border-radius:4px"></div>
<div class="a" style="left:1143.2px;top:310.3px;width:7.4px;height:266px;background:#808080;border-radius:4px"></div>
<div class="t" style="left:1103px;top:734.3px;font-size:13px;color:#111">10 &lt; 100</div>
<div class="a" style="left:72px;top:748px;width:1082px;height:1px;background:#c4c4c4"></div>
<div class="a" style="left:72px;top:749px;width:1082px;height:21px;background:#fff"></div>
<div class="a" style="left:72px;top:770px;width:1082px;height:1.2px;background:#c8c8c8"></div>
<div class="t" style="left:77.3px;top:751.5px;font-size:13.5px;color:#1414d4"><i>Command:</i> viewport</div>
<div class="a" style="left:1142px;top:750px;width:8px;height:17px;background:#808080;border-radius:4px"></div>
<div class="t" style="left:73.3px;top:779px;font-size:13px;color:#111">Position:</div>
<div class="a" style="left:128px;top:776px;width:998px;height:18px;background:#fff"></div>
<div class="a" style="left:1127px;top:772.5px;width:26px;height:25px;background:linear-gradient(#f2f2f2,#e4e4e4);border:1px solid #b8b8b8"></div>
<svg style="left:1127px;top:772px" width="27" height="26" viewBox="1127 772 27 26"><rect x="1133.3" y="780.8" width="13.5" height="9" fill="#fff" stroke="#333" stroke-width="0.9"/><rect x="1133" y="780.5" width="14" height="2.5" fill="#000"/><circle cx="1144.5" cy="781.7" r="0.5" fill="#fff"/></svg>
<div class="t sb" style="left:2px;top:807px">120,70</div>
<div class="t sb" style="left:2px;top:827.5px;letter-spacing:0.25px">@-249.6252,-278.3622</div>
<div class="a" style="left:253.5px;top:803px;width:1px;height:39px;background:#a8a8a8"></div>
<div class="t sb" style="left:256px;top:807px;letter-spacing:0.1px">138.9244&lt;30°</div>
<div class="t sb" style="left:256px;top:827.5px;letter-spacing:0.1px">@373.896&lt;228°</div>
<div class="t sb" style="left:662.7px;top:817.5px">Position</div>
<div class="t sb" style="left:754.2px;top:817.5px">Cancel</div>
<div class="t sb" style="left:949px;top:817.5px;letter-spacing:0.2px">No entities selected.</div>
<svg style="left:500px;top:800px" width="800" height="44" viewBox="500 800 800 44"><circle cx="509.2" cy="822" r="3" fill="#c4c4c4"/><circle cx="943" cy="822" r="3" fill="#c4c4c4"/><circle cx="1272" cy="822" r="3" fill="#c4c4c4"/><rect x="717.5" y="806" width="17" height="30" rx="8.5" fill="#fff" stroke="#333" stroke-width="0.9"/><path d="M717.5 819.5Q726 817 734.5 819.5M726 806V818.3" stroke="#333" stroke-width="0.9" fill="none"/><rect x="724.5" y="809" width="3" height="6" rx="1.5" fill="#fff" stroke="#333" stroke-width="0.8"/></svg>
</body></html>
